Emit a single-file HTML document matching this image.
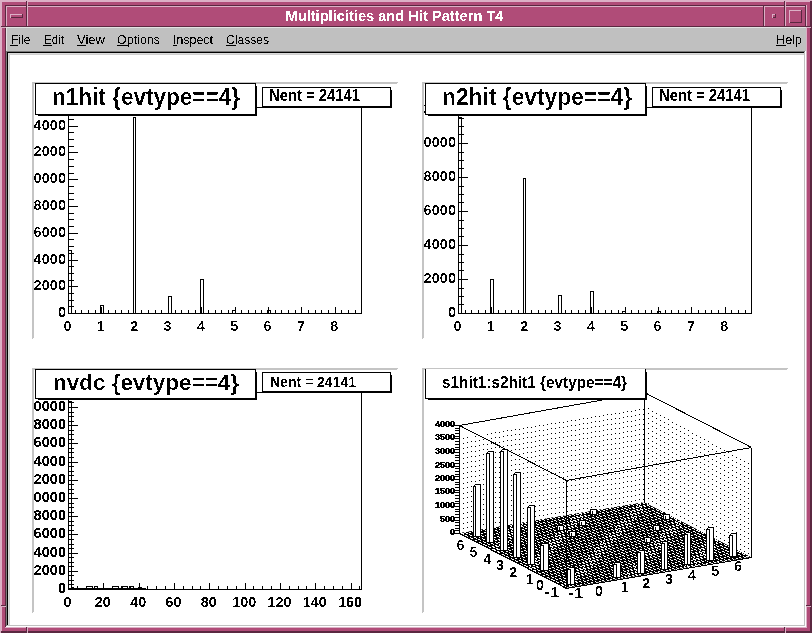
<!DOCTYPE html>
<html><head><meta charset="utf-8"><style>
html,body{margin:0;padding:0;background:#fff;}
body{width:812px;height:633px;overflow:hidden;position:relative;}
svg{position:absolute;left:0;top:0;font-family:"Liberation Sans",sans-serif;}
</style></head><body>
<svg width="812" height="633" viewBox="0 0 812 633" shape-rendering="crispEdges">
<defs><filter id="crisp" x="0" y="0" width="100%" height="100%" color-interpolation-filters="sRGB"><feComponentTransfer><feFuncA type="discrete" tableValues="0 1"/></feComponentTransfer></filter><filter id="thin" x="0" y="0" width="100%" height="100%" color-interpolation-filters="sRGB"><feComponentTransfer><feFuncA type="discrete" tableValues="0 0 0 1 1"/></feComponentTransfer></filter></defs>
<rect x="0" y="0" width="812" height="633" fill="#b04c78"/>
<rect x="0" y="0" width="812" height="2" fill="#dcb0c6"/>
<rect x="0" y="0" width="2" height="633" fill="#dcb0c6"/>
<rect x="810" y="1" width="2" height="632" fill="#5a2840"/>
<rect x="1" y="631" width="811" height="2" fill="#5a2840"/>
<rect x="5" y="5" width="801" height="1" fill="#5a2840"/>
<rect x="5" y="5" width="1" height="622" fill="#5a2840"/>
<rect x="806" y="5" width="1" height="623" fill="#dcb0c6"/>
<rect x="5" y="627" width="802" height="1" fill="#dcb0c6"/>
<rect x="26" y="1" width="1" height="5" fill="#5a2840"/>
<rect x="27" y="0" width="1" height="6" fill="#dcb0c6"/>
<rect x="26" y="627" width="1" height="5" fill="#5a2840"/>
<rect x="27" y="627" width="1" height="6" fill="#dcb0c6"/>
<rect x="784" y="1" width="1" height="5" fill="#5a2840"/>
<rect x="785" y="0" width="1" height="6" fill="#dcb0c6"/>
<rect x="784" y="627" width="1" height="5" fill="#5a2840"/>
<rect x="785" y="627" width="1" height="6" fill="#dcb0c6"/>
<rect x="1" y="26" width="5" height="1" fill="#5a2840"/>
<rect x="0" y="27" width="6" height="1" fill="#dcb0c6"/>
<rect x="806" y="26" width="6" height="1" fill="#5a2840"/>
<rect x="806" y="27" width="5" height="1" fill="#dcb0c6"/>
<rect x="1" y="605" width="5" height="1" fill="#5a2840"/>
<rect x="0" y="606" width="6" height="1" fill="#dcb0c6"/>
<rect x="806" y="605" width="6" height="1" fill="#5a2840"/>
<rect x="806" y="606" width="5" height="1" fill="#dcb0c6"/>
<rect x="6" y="6" width="21" height="1" fill="#dcb0c6"/>
<rect x="6" y="6" width="1" height="21" fill="#dcb0c6"/>
<rect x="26" y="6" width="1" height="21" fill="#5a2840"/>
<rect x="6" y="26" width="21" height="1" fill="#5a2840"/>
<rect x="27" y="6" width="737" height="1" fill="#dcb0c6"/>
<rect x="27" y="6" width="1" height="21" fill="#dcb0c6"/>
<rect x="763" y="6" width="1" height="21" fill="#5a2840"/>
<rect x="27" y="26" width="737" height="1" fill="#5a2840"/>
<rect x="764" y="6" width="21" height="1" fill="#dcb0c6"/>
<rect x="764" y="6" width="1" height="21" fill="#dcb0c6"/>
<rect x="784" y="6" width="1" height="21" fill="#5a2840"/>
<rect x="764" y="26" width="21" height="1" fill="#5a2840"/>
<rect x="785" y="6" width="21" height="1" fill="#dcb0c6"/>
<rect x="785" y="6" width="1" height="21" fill="#dcb0c6"/>
<rect x="805" y="6" width="1" height="21" fill="#5a2840"/>
<rect x="785" y="26" width="21" height="1" fill="#5a2840"/>
<rect x="10" y="14" width="13" height="1" fill="#dcb0c6"/>
<rect x="10" y="14" width="1" height="4" fill="#dcb0c6"/>
<rect x="11" y="17" width="12" height="1" fill="#5a2840"/>
<rect x="22" y="14" width="1" height="4" fill="#5a2840"/>
<rect x="772" y="14" width="4" height="1" fill="#dcb0c6"/>
<rect x="772" y="14" width="1" height="4" fill="#dcb0c6"/>
<rect x="773" y="17" width="3" height="1" fill="#5a2840"/>
<rect x="775" y="14" width="1" height="4" fill="#5a2840"/>
<rect x="789" y="10" width="13" height="1" fill="#dcb0c6"/>
<rect x="789" y="10" width="1" height="13" fill="#dcb0c6"/>
<rect x="790" y="22" width="12" height="1" fill="#5a2840"/>
<rect x="801" y="10" width="1" height="13" fill="#5a2840"/>
<text x="394.5" y="21" font-size="14" font-weight="bold" text-anchor="middle" fill="#fff" textLength="218" lengthAdjust="spacingAndGlyphs" filter="url(#crisp)">Multiplicities and Hit Pattern T4</text>
<rect x="6" y="27" width="800" height="24" fill="#c0c0c0"/>
<rect x="6" y="27" width="800" height="1" fill="#e4e4e4"/>
<rect x="6" y="27" width="1" height="24" fill="#e4e4e4"/>
<text x="11" y="44" font-size="12" font-weight="normal" text-anchor="start" fill="#000" textLength="19.5" lengthAdjust="spacingAndGlyphs" filter="url(#crisp)">File</text>
<rect x="10" y="45" width="8" height="1" fill="#000"/>
<text x="44" y="44" font-size="12" font-weight="normal" text-anchor="start" fill="#000" textLength="20" lengthAdjust="spacingAndGlyphs" filter="url(#crisp)">Edit</text>
<rect x="43" y="45" width="9" height="1" fill="#000"/>
<text x="77" y="44" font-size="12" font-weight="normal" text-anchor="start" fill="#000" textLength="28" lengthAdjust="spacingAndGlyphs" filter="url(#crisp)">View</text>
<rect x="77" y="45" width="9" height="1" fill="#000"/>
<text x="117" y="44" font-size="12" font-weight="normal" text-anchor="start" fill="#000" textLength="43" lengthAdjust="spacingAndGlyphs" filter="url(#crisp)">Options</text>
<rect x="117" y="45" width="11" height="1" fill="#000"/>
<text x="173" y="44" font-size="12" font-weight="normal" text-anchor="start" fill="#000" textLength="40" lengthAdjust="spacingAndGlyphs" filter="url(#crisp)">Inspect</text>
<rect x="173" y="45" width="4" height="1" fill="#000"/>
<text x="226" y="44" font-size="12" font-weight="normal" text-anchor="start" fill="#000" textLength="43" lengthAdjust="spacingAndGlyphs" filter="url(#crisp)">Classes</text>
<rect x="226" y="45" width="10" height="1" fill="#000"/>
<text x="776" y="44" font-size="12" font-weight="normal" text-anchor="start" fill="#000" textLength="26" lengthAdjust="spacingAndGlyphs" filter="url(#crisp)">Help</text>
<rect x="776" y="45" width="10" height="1" fill="#000"/>
<rect x="6" y="51" width="799" height="1" fill="#7a7a7a"/>
<rect x="6" y="51" width="1" height="575" fill="#7a7a7a"/>
<rect x="7" y="52" width="797" height="1" fill="#000"/>
<rect x="7" y="52" width="1" height="573" fill="#000"/>
<rect x="6" y="626" width="800" height="1" fill="#fff"/>
<rect x="805" y="51" width="1" height="576" fill="#fff"/>
<rect x="7" y="625" width="798" height="1" fill="#c0c0c0"/>
<rect x="804" y="52" width="1" height="574" fill="#c0c0c0"/>
<rect x="8" y="53" width="796" height="572" fill="#fff"/>
<rect x="8" y="53" width="796" height="1" fill="#dadada"/>
<rect x="8" y="53" width="1" height="572" fill="#dadada"/>
<rect x="9" y="54" width="795" height="1" fill="#d0d0d0"/>
<rect x="9" y="54" width="1" height="571" fill="#d0d0d0"/>
<polygon points="32,82 398,82 396,84 34,84" fill="#c4c4c4"/>
<polygon points="32,82 34,84 34,337 32,339" fill="#c4c4c4"/>
<clipPath id="c1"><rect x="33" y="84" width="365" height="255"/></clipPath>
<g clip-path="url(#c1)">
<text x="66" y="317" font-size="15" font-weight="bold" text-anchor="end" fill="#000" textLength="8.1" lengthAdjust="spacingAndGlyphs" filter="url(#thin)">0</text>
<text x="66" y="290" font-size="15" font-weight="bold" text-anchor="end" fill="#000" textLength="32.4" lengthAdjust="spacingAndGlyphs" filter="url(#thin)">2000</text>
<text x="66" y="264" font-size="15" font-weight="bold" text-anchor="end" fill="#000" textLength="32.4" lengthAdjust="spacingAndGlyphs" filter="url(#thin)">4000</text>
<text x="66" y="237" font-size="15" font-weight="bold" text-anchor="end" fill="#000" textLength="32.4" lengthAdjust="spacingAndGlyphs" filter="url(#thin)">6000</text>
<text x="66" y="210" font-size="15" font-weight="bold" text-anchor="end" fill="#000" textLength="32.4" lengthAdjust="spacingAndGlyphs" filter="url(#thin)">8000</text>
<text x="66" y="183" font-size="15" font-weight="bold" text-anchor="end" fill="#000" textLength="40.5" lengthAdjust="spacingAndGlyphs" filter="url(#thin)">10000</text>
<text x="66" y="156" font-size="15" font-weight="bold" text-anchor="end" fill="#000" textLength="40.5" lengthAdjust="spacingAndGlyphs" filter="url(#thin)">12000</text>
<text x="66" y="130" font-size="15" font-weight="bold" text-anchor="end" fill="#000" textLength="40.5" lengthAdjust="spacingAndGlyphs" filter="url(#thin)">14000</text>
<text x="67.5" y="331" font-size="15" font-weight="bold" text-anchor="middle" fill="#000" textLength="8" lengthAdjust="spacingAndGlyphs" filter="url(#thin)">0</text>
<text x="100.85" y="331" font-size="15" font-weight="bold" text-anchor="middle" fill="#000" textLength="8" lengthAdjust="spacingAndGlyphs" filter="url(#thin)">1</text>
<text x="134.2" y="331" font-size="15" font-weight="bold" text-anchor="middle" fill="#000" textLength="8" lengthAdjust="spacingAndGlyphs" filter="url(#thin)">2</text>
<text x="167.55" y="331" font-size="15" font-weight="bold" text-anchor="middle" fill="#000" textLength="8" lengthAdjust="spacingAndGlyphs" filter="url(#thin)">3</text>
<text x="200.9" y="331" font-size="15" font-weight="bold" text-anchor="middle" fill="#000" textLength="8" lengthAdjust="spacingAndGlyphs" filter="url(#thin)">4</text>
<text x="234.25" y="331" font-size="15" font-weight="bold" text-anchor="middle" fill="#000" textLength="8" lengthAdjust="spacingAndGlyphs" filter="url(#thin)">5</text>
<text x="267.6" y="331" font-size="15" font-weight="bold" text-anchor="middle" fill="#000" textLength="8" lengthAdjust="spacingAndGlyphs" filter="url(#thin)">6</text>
<text x="300.95000000000005" y="331" font-size="15" font-weight="bold" text-anchor="middle" fill="#000" textLength="8" lengthAdjust="spacingAndGlyphs" filter="url(#thin)">7</text>
<text x="334.3" y="331" font-size="15" font-weight="bold" text-anchor="middle" fill="#000" textLength="8" lengthAdjust="spacingAndGlyphs" filter="url(#thin)">8</text>
<rect x="68" y="107" width="294" height="1" fill="#000"/>
<rect x="68" y="313" width="294" height="1" fill="#000"/>
<rect x="68" y="107" width="1" height="207" fill="#000"/>
<rect x="361" y="107" width="1" height="207" fill="#000"/>
<rect x="68" y="313" width="10" height="1" fill="#000"/>
<rect x="68" y="306" width="6" height="1" fill="#000"/>
<rect x="68" y="300" width="6" height="1" fill="#000"/>
<rect x="68" y="293" width="6" height="1" fill="#000"/>
<rect x="68" y="286" width="10" height="1" fill="#000"/>
<rect x="68" y="280" width="6" height="1" fill="#000"/>
<rect x="68" y="273" width="6" height="1" fill="#000"/>
<rect x="68" y="266" width="6" height="1" fill="#000"/>
<rect x="68" y="260" width="10" height="1" fill="#000"/>
<rect x="68" y="253" width="6" height="1" fill="#000"/>
<rect x="68" y="246" width="6" height="1" fill="#000"/>
<rect x="68" y="239" width="6" height="1" fill="#000"/>
<rect x="68" y="233" width="10" height="1" fill="#000"/>
<rect x="68" y="226" width="6" height="1" fill="#000"/>
<rect x="68" y="219" width="6" height="1" fill="#000"/>
<rect x="68" y="213" width="6" height="1" fill="#000"/>
<rect x="68" y="206" width="10" height="1" fill="#000"/>
<rect x="68" y="199" width="6" height="1" fill="#000"/>
<rect x="68" y="193" width="6" height="1" fill="#000"/>
<rect x="68" y="186" width="6" height="1" fill="#000"/>
<rect x="68" y="179" width="10" height="1" fill="#000"/>
<rect x="68" y="173" width="6" height="1" fill="#000"/>
<rect x="68" y="166" width="6" height="1" fill="#000"/>
<rect x="68" y="159" width="6" height="1" fill="#000"/>
<rect x="68" y="152" width="10" height="1" fill="#000"/>
<rect x="68" y="146" width="6" height="1" fill="#000"/>
<rect x="68" y="139" width="6" height="1" fill="#000"/>
<rect x="68" y="132" width="6" height="1" fill="#000"/>
<rect x="68" y="126" width="10" height="1" fill="#000"/>
<rect x="68" y="119" width="6" height="1" fill="#000"/>
<rect x="68" y="112" width="6" height="1" fill="#000"/>
<rect x="68" y="307" width="1" height="6" fill="#000"/>
<rect x="75" y="310" width="1" height="3" fill="#000"/>
<rect x="81" y="310" width="1" height="3" fill="#000"/>
<rect x="88" y="310" width="1" height="3" fill="#000"/>
<rect x="95" y="310" width="1" height="3" fill="#000"/>
<rect x="101" y="307" width="1" height="6" fill="#000"/>
<rect x="108" y="310" width="1" height="3" fill="#000"/>
<rect x="115" y="310" width="1" height="3" fill="#000"/>
<rect x="121" y="310" width="1" height="3" fill="#000"/>
<rect x="128" y="310" width="1" height="3" fill="#000"/>
<rect x="135" y="307" width="1" height="6" fill="#000"/>
<rect x="141" y="310" width="1" height="3" fill="#000"/>
<rect x="148" y="310" width="1" height="3" fill="#000"/>
<rect x="155" y="310" width="1" height="3" fill="#000"/>
<rect x="161" y="310" width="1" height="3" fill="#000"/>
<rect x="168" y="307" width="1" height="6" fill="#000"/>
<rect x="175" y="310" width="1" height="3" fill="#000"/>
<rect x="181" y="310" width="1" height="3" fill="#000"/>
<rect x="188" y="310" width="1" height="3" fill="#000"/>
<rect x="195" y="310" width="1" height="3" fill="#000"/>
<rect x="201" y="307" width="1" height="6" fill="#000"/>
<rect x="208" y="310" width="1" height="3" fill="#000"/>
<rect x="215" y="310" width="1" height="3" fill="#000"/>
<rect x="221" y="310" width="1" height="3" fill="#000"/>
<rect x="228" y="310" width="1" height="3" fill="#000"/>
<rect x="235" y="307" width="1" height="6" fill="#000"/>
<rect x="241" y="310" width="1" height="3" fill="#000"/>
<rect x="248" y="310" width="1" height="3" fill="#000"/>
<rect x="255" y="310" width="1" height="3" fill="#000"/>
<rect x="261" y="310" width="1" height="3" fill="#000"/>
<rect x="268" y="307" width="1" height="6" fill="#000"/>
<rect x="275" y="310" width="1" height="3" fill="#000"/>
<rect x="281" y="310" width="1" height="3" fill="#000"/>
<rect x="288" y="310" width="1" height="3" fill="#000"/>
<rect x="295" y="310" width="1" height="3" fill="#000"/>
<rect x="301" y="307" width="1" height="6" fill="#000"/>
<rect x="308" y="310" width="1" height="3" fill="#000"/>
<rect x="315" y="310" width="1" height="3" fill="#000"/>
<rect x="321" y="310" width="1" height="3" fill="#000"/>
<rect x="328" y="310" width="1" height="3" fill="#000"/>
<rect x="335" y="307" width="1" height="6" fill="#000"/>
<rect x="341" y="310" width="1" height="3" fill="#000"/>
<rect x="348" y="310" width="1" height="3" fill="#000"/>
<rect x="355" y="310" width="1" height="3" fill="#000"/>
<rect x="68" y="250" width="1" height="64" fill="#000"/>
<rect x="71" y="250" width="1" height="64" fill="#000"/>
<rect x="68" y="250" width="4" height="1" fill="#000"/>
<rect x="100" y="305" width="1" height="9" fill="#000"/>
<rect x="103" y="305" width="1" height="9" fill="#000"/>
<rect x="100" y="305" width="4" height="1" fill="#000"/>
<rect x="133" y="117" width="1" height="197" fill="#000"/>
<rect x="135" y="117" width="1" height="197" fill="#000"/>
<rect x="133" y="117" width="3" height="1" fill="#000"/>
<rect x="168" y="296" width="1" height="18" fill="#000"/>
<rect x="171" y="296" width="1" height="18" fill="#000"/>
<rect x="168" y="296" width="4" height="1" fill="#000"/>
<rect x="200" y="279" width="1" height="35" fill="#000"/>
<rect x="203" y="279" width="1" height="35" fill="#000"/>
<rect x="200" y="279" width="4" height="1" fill="#000"/>
<rect x="232" y="310" width="1" height="4" fill="#000"/>
<rect x="235" y="310" width="1" height="4" fill="#000"/>
<rect x="232" y="310" width="4" height="1" fill="#000"/>
<rect x="267" y="310" width="1" height="4" fill="#000"/>
<rect x="270" y="310" width="1" height="4" fill="#000"/>
<rect x="267" y="310" width="4" height="1" fill="#000"/>
</g>
<rect x="35" y="83" width="221" height="32" fill="#fff"/>
<rect x="35" y="83" width="221" height="1" fill="#000"/>
<rect x="35" y="114" width="221" height="1" fill="#000"/>
<rect x="35" y="83" width="1" height="32" fill="#000"/>
<rect x="255" y="83" width="1" height="32" fill="#000"/>
<rect x="256" y="86" width="1" height="30" fill="#000"/>
<rect x="38" y="115" width="219" height="1" fill="#000"/>
<text x="52" y="105" font-size="23" font-weight="bold" text-anchor="start" fill="#000" textLength="188" lengthAdjust="spacingAndGlyphs" filter="url(#thin)">n1hit {evtype==4}</text>
<rect x="262" y="87" width="129" height="20" fill="#fff"/>
<rect x="262" y="87" width="129" height="1" fill="#000"/>
<rect x="262" y="106" width="129" height="1" fill="#000"/>
<rect x="262" y="87" width="1" height="20" fill="#000"/>
<rect x="390" y="87" width="1" height="20" fill="#000"/>
<rect x="391" y="90" width="1" height="18" fill="#000"/>
<rect x="265" y="107" width="127" height="1" fill="#000"/>
<text x="269" y="101" font-size="16" font-weight="bold" text-anchor="start" fill="#000" textLength="91" lengthAdjust="spacingAndGlyphs" filter="url(#crisp)">Nent = 24141</text>
<polygon points="422,82 788,82 786,84 424,84" fill="#c4c4c4"/>
<polygon points="422,82 424,84 424,337 422,339" fill="#c4c4c4"/>
<clipPath id="c2"><rect x="423" y="84" width="365" height="255"/></clipPath>
<g clip-path="url(#c2)">
<text x="456" y="317" font-size="15" font-weight="bold" text-anchor="end" fill="#000" textLength="8.1" lengthAdjust="spacingAndGlyphs" filter="url(#thin)">0</text>
<text x="456" y="283" font-size="15" font-weight="bold" text-anchor="end" fill="#000" textLength="32.4" lengthAdjust="spacingAndGlyphs" filter="url(#thin)">2000</text>
<text x="456" y="249" font-size="15" font-weight="bold" text-anchor="end" fill="#000" textLength="32.4" lengthAdjust="spacingAndGlyphs" filter="url(#thin)">4000</text>
<text x="456" y="215" font-size="15" font-weight="bold" text-anchor="end" fill="#000" textLength="32.4" lengthAdjust="spacingAndGlyphs" filter="url(#thin)">6000</text>
<text x="456" y="181" font-size="15" font-weight="bold" text-anchor="end" fill="#000" textLength="32.4" lengthAdjust="spacingAndGlyphs" filter="url(#thin)">8000</text>
<text x="456" y="147" font-size="15" font-weight="bold" text-anchor="end" fill="#000" textLength="40.5" lengthAdjust="spacingAndGlyphs" filter="url(#thin)">10000</text>
<text x="456" y="113" font-size="15" font-weight="bold" text-anchor="end" fill="#000" textLength="40.5" lengthAdjust="spacingAndGlyphs" filter="url(#thin)">12000</text>
<text x="457.5" y="331" font-size="15" font-weight="bold" text-anchor="middle" fill="#000" textLength="8" lengthAdjust="spacingAndGlyphs" filter="url(#thin)">0</text>
<text x="490.85" y="331" font-size="15" font-weight="bold" text-anchor="middle" fill="#000" textLength="8" lengthAdjust="spacingAndGlyphs" filter="url(#thin)">1</text>
<text x="524.2" y="331" font-size="15" font-weight="bold" text-anchor="middle" fill="#000" textLength="8" lengthAdjust="spacingAndGlyphs" filter="url(#thin)">2</text>
<text x="557.55" y="331" font-size="15" font-weight="bold" text-anchor="middle" fill="#000" textLength="8" lengthAdjust="spacingAndGlyphs" filter="url(#thin)">3</text>
<text x="590.9" y="331" font-size="15" font-weight="bold" text-anchor="middle" fill="#000" textLength="8" lengthAdjust="spacingAndGlyphs" filter="url(#thin)">4</text>
<text x="624.25" y="331" font-size="15" font-weight="bold" text-anchor="middle" fill="#000" textLength="8" lengthAdjust="spacingAndGlyphs" filter="url(#thin)">5</text>
<text x="657.6" y="331" font-size="15" font-weight="bold" text-anchor="middle" fill="#000" textLength="8" lengthAdjust="spacingAndGlyphs" filter="url(#thin)">6</text>
<text x="690.95" y="331" font-size="15" font-weight="bold" text-anchor="middle" fill="#000" textLength="8" lengthAdjust="spacingAndGlyphs" filter="url(#thin)">7</text>
<text x="724.3" y="331" font-size="15" font-weight="bold" text-anchor="middle" fill="#000" textLength="8" lengthAdjust="spacingAndGlyphs" filter="url(#thin)">8</text>
<rect x="458" y="107" width="294" height="1" fill="#000"/>
<rect x="458" y="313" width="294" height="1" fill="#000"/>
<rect x="458" y="107" width="1" height="207" fill="#000"/>
<rect x="751" y="107" width="1" height="207" fill="#000"/>
<rect x="458" y="313" width="10" height="1" fill="#000"/>
<rect x="458" y="304" width="6" height="1" fill="#000"/>
<rect x="458" y="296" width="6" height="1" fill="#000"/>
<rect x="458" y="288" width="6" height="1" fill="#000"/>
<rect x="458" y="279" width="10" height="1" fill="#000"/>
<rect x="458" y="270" width="6" height="1" fill="#000"/>
<rect x="458" y="262" width="6" height="1" fill="#000"/>
<rect x="458" y="254" width="6" height="1" fill="#000"/>
<rect x="458" y="245" width="10" height="1" fill="#000"/>
<rect x="458" y="236" width="6" height="1" fill="#000"/>
<rect x="458" y="228" width="6" height="1" fill="#000"/>
<rect x="458" y="220" width="6" height="1" fill="#000"/>
<rect x="458" y="211" width="10" height="1" fill="#000"/>
<rect x="458" y="202" width="6" height="1" fill="#000"/>
<rect x="458" y="194" width="6" height="1" fill="#000"/>
<rect x="458" y="186" width="6" height="1" fill="#000"/>
<rect x="458" y="177" width="10" height="1" fill="#000"/>
<rect x="458" y="168" width="6" height="1" fill="#000"/>
<rect x="458" y="160" width="6" height="1" fill="#000"/>
<rect x="458" y="152" width="6" height="1" fill="#000"/>
<rect x="458" y="143" width="10" height="1" fill="#000"/>
<rect x="458" y="134" width="6" height="1" fill="#000"/>
<rect x="458" y="126" width="6" height="1" fill="#000"/>
<rect x="458" y="118" width="6" height="1" fill="#000"/>
<rect x="458" y="109" width="10" height="1" fill="#000"/>
<rect x="458" y="307" width="1" height="6" fill="#000"/>
<rect x="465" y="310" width="1" height="3" fill="#000"/>
<rect x="471" y="310" width="1" height="3" fill="#000"/>
<rect x="478" y="310" width="1" height="3" fill="#000"/>
<rect x="485" y="310" width="1" height="3" fill="#000"/>
<rect x="491" y="307" width="1" height="6" fill="#000"/>
<rect x="498" y="310" width="1" height="3" fill="#000"/>
<rect x="505" y="310" width="1" height="3" fill="#000"/>
<rect x="511" y="310" width="1" height="3" fill="#000"/>
<rect x="518" y="310" width="1" height="3" fill="#000"/>
<rect x="525" y="307" width="1" height="6" fill="#000"/>
<rect x="531" y="310" width="1" height="3" fill="#000"/>
<rect x="538" y="310" width="1" height="3" fill="#000"/>
<rect x="545" y="310" width="1" height="3" fill="#000"/>
<rect x="551" y="310" width="1" height="3" fill="#000"/>
<rect x="558" y="307" width="1" height="6" fill="#000"/>
<rect x="565" y="310" width="1" height="3" fill="#000"/>
<rect x="571" y="310" width="1" height="3" fill="#000"/>
<rect x="578" y="310" width="1" height="3" fill="#000"/>
<rect x="585" y="310" width="1" height="3" fill="#000"/>
<rect x="591" y="307" width="1" height="6" fill="#000"/>
<rect x="598" y="310" width="1" height="3" fill="#000"/>
<rect x="605" y="310" width="1" height="3" fill="#000"/>
<rect x="611" y="310" width="1" height="3" fill="#000"/>
<rect x="618" y="310" width="1" height="3" fill="#000"/>
<rect x="625" y="307" width="1" height="6" fill="#000"/>
<rect x="631" y="310" width="1" height="3" fill="#000"/>
<rect x="638" y="310" width="1" height="3" fill="#000"/>
<rect x="645" y="310" width="1" height="3" fill="#000"/>
<rect x="651" y="310" width="1" height="3" fill="#000"/>
<rect x="658" y="307" width="1" height="6" fill="#000"/>
<rect x="665" y="310" width="1" height="3" fill="#000"/>
<rect x="671" y="310" width="1" height="3" fill="#000"/>
<rect x="678" y="310" width="1" height="3" fill="#000"/>
<rect x="685" y="310" width="1" height="3" fill="#000"/>
<rect x="691" y="307" width="1" height="6" fill="#000"/>
<rect x="698" y="310" width="1" height="3" fill="#000"/>
<rect x="705" y="310" width="1" height="3" fill="#000"/>
<rect x="711" y="310" width="1" height="3" fill="#000"/>
<rect x="718" y="310" width="1" height="3" fill="#000"/>
<rect x="725" y="307" width="1" height="6" fill="#000"/>
<rect x="731" y="310" width="1" height="3" fill="#000"/>
<rect x="738" y="310" width="1" height="3" fill="#000"/>
<rect x="745" y="310" width="1" height="3" fill="#000"/>
<rect x="458" y="117" width="1" height="197" fill="#000"/>
<rect x="461" y="117" width="1" height="197" fill="#000"/>
<rect x="458" y="117" width="4" height="1" fill="#000"/>
<rect x="490" y="279" width="1" height="35" fill="#000"/>
<rect x="493" y="279" width="1" height="35" fill="#000"/>
<rect x="490" y="279" width="4" height="1" fill="#000"/>
<rect x="523" y="178" width="1" height="136" fill="#000"/>
<rect x="525" y="178" width="1" height="136" fill="#000"/>
<rect x="523" y="178" width="3" height="1" fill="#000"/>
<rect x="558" y="295" width="1" height="19" fill="#000"/>
<rect x="561" y="295" width="1" height="19" fill="#000"/>
<rect x="558" y="295" width="4" height="1" fill="#000"/>
<rect x="590" y="291" width="1" height="23" fill="#000"/>
<rect x="593" y="291" width="1" height="23" fill="#000"/>
<rect x="590" y="291" width="4" height="1" fill="#000"/>
<rect x="622" y="311" width="1" height="3" fill="#000"/>
<rect x="625" y="311" width="1" height="3" fill="#000"/>
<rect x="622" y="311" width="4" height="1" fill="#000"/>
<rect x="657" y="311" width="1" height="3" fill="#000"/>
<rect x="660" y="311" width="1" height="3" fill="#000"/>
<rect x="657" y="311" width="4" height="1" fill="#000"/>
</g>
<rect x="425" y="83" width="221" height="32" fill="#fff"/>
<rect x="425" y="83" width="221" height="1" fill="#000"/>
<rect x="425" y="114" width="221" height="1" fill="#000"/>
<rect x="425" y="83" width="1" height="32" fill="#000"/>
<rect x="645" y="83" width="1" height="32" fill="#000"/>
<rect x="646" y="86" width="1" height="30" fill="#000"/>
<rect x="428" y="115" width="219" height="1" fill="#000"/>
<text x="442" y="105" font-size="23" font-weight="bold" text-anchor="start" fill="#000" textLength="190" lengthAdjust="spacingAndGlyphs" filter="url(#thin)">n2hit {evtype==4}</text>
<rect x="652" y="87" width="129" height="20" fill="#fff"/>
<rect x="652" y="87" width="129" height="1" fill="#000"/>
<rect x="652" y="106" width="129" height="1" fill="#000"/>
<rect x="652" y="87" width="1" height="20" fill="#000"/>
<rect x="780" y="87" width="1" height="20" fill="#000"/>
<rect x="781" y="90" width="1" height="18" fill="#000"/>
<rect x="655" y="107" width="127" height="1" fill="#000"/>
<text x="659" y="101" font-size="16" font-weight="bold" text-anchor="start" fill="#000" textLength="91" lengthAdjust="spacingAndGlyphs" filter="url(#crisp)">Nent = 24141</text>
<polygon points="32,368 398,368 396,370 34,370" fill="#c4c4c4"/>
<polygon points="32,368 34,370 34,611 32,613" fill="#c4c4c4"/>
<clipPath id="c3"><rect x="33" y="370" width="365" height="243"/></clipPath>
<g clip-path="url(#c3)">
<text x="66" y="593" font-size="14.5" font-weight="bold" text-anchor="end" fill="#000" textLength="8.1" lengthAdjust="spacingAndGlyphs" filter="url(#crisp)">0</text>
<text x="66" y="575" font-size="14.5" font-weight="bold" text-anchor="end" fill="#000" textLength="32.4" lengthAdjust="spacingAndGlyphs" filter="url(#crisp)">2000</text>
<text x="66" y="557" font-size="14.5" font-weight="bold" text-anchor="end" fill="#000" textLength="32.4" lengthAdjust="spacingAndGlyphs" filter="url(#crisp)">4000</text>
<text x="66" y="538" font-size="14.5" font-weight="bold" text-anchor="end" fill="#000" textLength="32.4" lengthAdjust="spacingAndGlyphs" filter="url(#crisp)">6000</text>
<text x="66" y="520" font-size="14.5" font-weight="bold" text-anchor="end" fill="#000" textLength="32.4" lengthAdjust="spacingAndGlyphs" filter="url(#crisp)">8000</text>
<text x="66" y="502" font-size="14.5" font-weight="bold" text-anchor="end" fill="#000" textLength="40.5" lengthAdjust="spacingAndGlyphs" filter="url(#crisp)">10000</text>
<text x="66" y="484" font-size="14.5" font-weight="bold" text-anchor="end" fill="#000" textLength="40.5" lengthAdjust="spacingAndGlyphs" filter="url(#crisp)">12000</text>
<text x="66" y="466" font-size="14.5" font-weight="bold" text-anchor="end" fill="#000" textLength="40.5" lengthAdjust="spacingAndGlyphs" filter="url(#crisp)">14000</text>
<text x="66" y="447" font-size="14.5" font-weight="bold" text-anchor="end" fill="#000" textLength="40.5" lengthAdjust="spacingAndGlyphs" filter="url(#crisp)">16000</text>
<text x="66" y="429" font-size="14.5" font-weight="bold" text-anchor="end" fill="#000" textLength="40.5" lengthAdjust="spacingAndGlyphs" filter="url(#crisp)">18000</text>
<text x="66" y="411" font-size="14.5" font-weight="bold" text-anchor="end" fill="#000" textLength="40.5" lengthAdjust="spacingAndGlyphs" filter="url(#crisp)">20000</text>
<text x="67.5" y="607" font-size="14.5" font-weight="bold" text-anchor="middle" fill="#000" textLength="8" lengthAdjust="spacingAndGlyphs" filter="url(#crisp)">0</text>
<text x="102.83" y="607" font-size="14.5" font-weight="bold" text-anchor="middle" fill="#000" textLength="16" lengthAdjust="spacingAndGlyphs" filter="url(#crisp)">20</text>
<text x="138.16" y="607" font-size="14.5" font-weight="bold" text-anchor="middle" fill="#000" textLength="16" lengthAdjust="spacingAndGlyphs" filter="url(#crisp)">40</text>
<text x="173.49" y="607" font-size="14.5" font-weight="bold" text-anchor="middle" fill="#000" textLength="16" lengthAdjust="spacingAndGlyphs" filter="url(#crisp)">60</text>
<text x="208.82" y="607" font-size="14.5" font-weight="bold" text-anchor="middle" fill="#000" textLength="16" lengthAdjust="spacingAndGlyphs" filter="url(#crisp)">80</text>
<text x="244.15" y="607" font-size="14.5" font-weight="bold" text-anchor="middle" fill="#000" textLength="24" lengthAdjust="spacingAndGlyphs" filter="url(#crisp)">100</text>
<text x="279.48" y="607" font-size="14.5" font-weight="bold" text-anchor="middle" fill="#000" textLength="24" lengthAdjust="spacingAndGlyphs" filter="url(#crisp)">120</text>
<text x="314.81" y="607" font-size="14.5" font-weight="bold" text-anchor="middle" fill="#000" textLength="24" lengthAdjust="spacingAndGlyphs" filter="url(#crisp)">140</text>
<text x="350.14" y="607" font-size="14.5" font-weight="bold" text-anchor="middle" fill="#000" textLength="24" lengthAdjust="spacingAndGlyphs" filter="url(#crisp)">160</text>
<rect x="68" y="392" width="294" height="1" fill="#000"/>
<rect x="68" y="589" width="294" height="1" fill="#000"/>
<rect x="68" y="392" width="1" height="198" fill="#000"/>
<rect x="361" y="392" width="1" height="198" fill="#000"/>
<rect x="68" y="589" width="10" height="1" fill="#000"/>
<rect x="68" y="584" width="6" height="1" fill="#000"/>
<rect x="68" y="580" width="6" height="1" fill="#000"/>
<rect x="68" y="575" width="6" height="1" fill="#000"/>
<rect x="68" y="571" width="10" height="1" fill="#000"/>
<rect x="68" y="566" width="6" height="1" fill="#000"/>
<rect x="68" y="562" width="6" height="1" fill="#000"/>
<rect x="68" y="557" width="6" height="1" fill="#000"/>
<rect x="68" y="553" width="10" height="1" fill="#000"/>
<rect x="68" y="548" width="6" height="1" fill="#000"/>
<rect x="68" y="544" width="6" height="1" fill="#000"/>
<rect x="68" y="539" width="6" height="1" fill="#000"/>
<rect x="68" y="534" width="10" height="1" fill="#000"/>
<rect x="68" y="530" width="6" height="1" fill="#000"/>
<rect x="68" y="525" width="6" height="1" fill="#000"/>
<rect x="68" y="521" width="6" height="1" fill="#000"/>
<rect x="68" y="516" width="10" height="1" fill="#000"/>
<rect x="68" y="512" width="6" height="1" fill="#000"/>
<rect x="68" y="507" width="6" height="1" fill="#000"/>
<rect x="68" y="503" width="6" height="1" fill="#000"/>
<rect x="68" y="498" width="10" height="1" fill="#000"/>
<rect x="68" y="493" width="6" height="1" fill="#000"/>
<rect x="68" y="489" width="6" height="1" fill="#000"/>
<rect x="68" y="484" width="6" height="1" fill="#000"/>
<rect x="68" y="480" width="10" height="1" fill="#000"/>
<rect x="68" y="475" width="6" height="1" fill="#000"/>
<rect x="68" y="471" width="6" height="1" fill="#000"/>
<rect x="68" y="466" width="6" height="1" fill="#000"/>
<rect x="68" y="462" width="10" height="1" fill="#000"/>
<rect x="68" y="457" width="6" height="1" fill="#000"/>
<rect x="68" y="452" width="6" height="1" fill="#000"/>
<rect x="68" y="448" width="6" height="1" fill="#000"/>
<rect x="68" y="443" width="10" height="1" fill="#000"/>
<rect x="68" y="439" width="6" height="1" fill="#000"/>
<rect x="68" y="434" width="6" height="1" fill="#000"/>
<rect x="68" y="430" width="6" height="1" fill="#000"/>
<rect x="68" y="425" width="10" height="1" fill="#000"/>
<rect x="68" y="421" width="6" height="1" fill="#000"/>
<rect x="68" y="416" width="6" height="1" fill="#000"/>
<rect x="68" y="412" width="6" height="1" fill="#000"/>
<rect x="68" y="407" width="10" height="1" fill="#000"/>
<rect x="68" y="402" width="6" height="1" fill="#000"/>
<rect x="68" y="398" width="6" height="1" fill="#000"/>
<rect x="68" y="393" width="6" height="1" fill="#000"/>
<rect x="68" y="583" width="1" height="6" fill="#000"/>
<rect x="77" y="586" width="1" height="3" fill="#000"/>
<rect x="86" y="586" width="1" height="3" fill="#000"/>
<rect x="94" y="586" width="1" height="3" fill="#000"/>
<rect x="103" y="583" width="1" height="6" fill="#000"/>
<rect x="112" y="586" width="1" height="3" fill="#000"/>
<rect x="121" y="586" width="1" height="3" fill="#000"/>
<rect x="130" y="586" width="1" height="3" fill="#000"/>
<rect x="139" y="583" width="1" height="6" fill="#000"/>
<rect x="147" y="586" width="1" height="3" fill="#000"/>
<rect x="156" y="586" width="1" height="3" fill="#000"/>
<rect x="165" y="586" width="1" height="3" fill="#000"/>
<rect x="174" y="583" width="1" height="6" fill="#000"/>
<rect x="183" y="586" width="1" height="3" fill="#000"/>
<rect x="192" y="586" width="1" height="3" fill="#000"/>
<rect x="200" y="586" width="1" height="3" fill="#000"/>
<rect x="209" y="583" width="1" height="6" fill="#000"/>
<rect x="218" y="586" width="1" height="3" fill="#000"/>
<rect x="227" y="586" width="1" height="3" fill="#000"/>
<rect x="236" y="586" width="1" height="3" fill="#000"/>
<rect x="245" y="583" width="1" height="6" fill="#000"/>
<rect x="253" y="586" width="1" height="3" fill="#000"/>
<rect x="262" y="586" width="1" height="3" fill="#000"/>
<rect x="271" y="586" width="1" height="3" fill="#000"/>
<rect x="280" y="583" width="1" height="6" fill="#000"/>
<rect x="289" y="586" width="1" height="3" fill="#000"/>
<rect x="298" y="586" width="1" height="3" fill="#000"/>
<rect x="306" y="586" width="1" height="3" fill="#000"/>
<rect x="315" y="583" width="1" height="6" fill="#000"/>
<rect x="324" y="586" width="1" height="3" fill="#000"/>
<rect x="333" y="586" width="1" height="3" fill="#000"/>
<rect x="342" y="586" width="1" height="3" fill="#000"/>
<rect x="351" y="583" width="1" height="6" fill="#000"/>
<rect x="359" y="586" width="1" height="3" fill="#000"/>
<rect x="68" y="401" width="1" height="189" fill="#000"/>
<rect x="71" y="401" width="1" height="189" fill="#000"/>
<rect x="68" y="401" width="4" height="1" fill="#000"/>
<rect x="71" y="587" width="1" height="3" fill="#000"/>
<rect x="73" y="587" width="1" height="3" fill="#000"/>
<rect x="71" y="587" width="3" height="1" fill="#000"/>
<rect x="86" y="586" width="1" height="4" fill="#000"/>
<rect x="92" y="586" width="1" height="4" fill="#000"/>
<rect x="86" y="586" width="7" height="1" fill="#000"/>
<rect x="94" y="586" width="1" height="4" fill="#000"/>
<rect x="97" y="586" width="1" height="4" fill="#000"/>
<rect x="94" y="586" width="4" height="1" fill="#000"/>
<rect x="112" y="586" width="1" height="4" fill="#000"/>
<rect x="118" y="586" width="1" height="4" fill="#000"/>
<rect x="112" y="586" width="7" height="1" fill="#000"/>
<rect x="122" y="586" width="1" height="4" fill="#000"/>
<rect x="127" y="586" width="1" height="4" fill="#000"/>
<rect x="122" y="586" width="6" height="1" fill="#000"/>
<rect x="129" y="586" width="1" height="4" fill="#000"/>
<rect x="133" y="586" width="1" height="4" fill="#000"/>
<rect x="129" y="586" width="5" height="1" fill="#000"/>
<rect x="138" y="587" width="1" height="3" fill="#000"/>
<rect x="141" y="587" width="1" height="3" fill="#000"/>
<rect x="138" y="587" width="4" height="1" fill="#000"/>
<rect x="68" y="588" width="78" height="1" fill="#000"/>
</g>
<rect x="35" y="369" width="221" height="30" fill="#fff"/>
<rect x="35" y="369" width="221" height="1" fill="#000"/>
<rect x="35" y="398" width="221" height="1" fill="#000"/>
<rect x="35" y="369" width="1" height="30" fill="#000"/>
<rect x="255" y="369" width="1" height="30" fill="#000"/>
<rect x="256" y="372" width="1" height="28" fill="#000"/>
<rect x="38" y="399" width="219" height="1" fill="#000"/>
<text x="53" y="390" font-size="22" font-weight="bold" text-anchor="start" fill="#000" textLength="186" lengthAdjust="spacingAndGlyphs" filter="url(#thin)">nvdc {evtype==4}</text>
<rect x="262" y="372" width="129" height="20" fill="#fff"/>
<rect x="262" y="372" width="129" height="1" fill="#000"/>
<rect x="262" y="391" width="129" height="1" fill="#000"/>
<rect x="262" y="372" width="1" height="20" fill="#000"/>
<rect x="390" y="372" width="1" height="20" fill="#000"/>
<rect x="391" y="375" width="1" height="18" fill="#000"/>
<rect x="265" y="392" width="127" height="1" fill="#000"/>
<text x="270" y="387" font-size="15" font-weight="bold" text-anchor="start" fill="#000" textLength="86" lengthAdjust="spacingAndGlyphs" filter="url(#crisp)">Nent = 24141</text>
<polygon points="422,368 788,368 786,370 424,370" fill="#c4c4c4"/>
<polygon points="422,368 424,370 424,611 422,613" fill="#c4c4c4"/>
<path d="M459,443h1v1h-1zM459,448h1v1h-1zM459,453h1v1h-1zM459,458h1v1h-1zM459,463h1v1h-1zM459,468h1v1h-1zM459,473h1v1h-1zM459,478h1v1h-1zM459,483h1v1h-1zM459,488h1v1h-1zM459,493h1v1h-1zM459,498h1v1h-1zM459,503h1v1h-1zM459,508h1v1h-1zM459,513h1v1h-1zM459,518h1v1h-1zM459,523h1v1h-1zM459,528h1v1h-1zM463,438h1v1h-1zM463,443h1v1h-1zM463,448h1v1h-1zM463,453h1v1h-1zM463,458h1v1h-1zM463,463h1v1h-1zM463,468h1v1h-1zM463,473h1v1h-1zM463,478h1v1h-1zM463,483h1v1h-1zM463,488h1v1h-1zM463,493h1v1h-1zM463,498h1v1h-1zM463,503h1v1h-1zM463,508h1v1h-1zM463,513h1v1h-1zM463,518h1v1h-1zM463,523h1v1h-1zM463,528h1v1h-1zM467,437h1v1h-1zM467,442h1v1h-1zM467,447h1v1h-1zM467,452h1v1h-1zM467,457h1v1h-1zM467,462h1v1h-1zM467,467h1v1h-1zM467,472h1v1h-1zM467,477h1v1h-1zM467,482h1v1h-1zM467,487h1v1h-1zM467,492h1v1h-1zM467,497h1v1h-1zM467,502h1v1h-1zM467,507h1v1h-1zM467,512h1v1h-1zM467,517h1v1h-1zM467,522h1v1h-1zM467,527h1v1h-1zM471,441h1v1h-1zM471,446h1v1h-1zM471,451h1v1h-1zM471,456h1v1h-1zM471,461h1v1h-1zM471,466h1v1h-1zM471,471h1v1h-1zM471,476h1v1h-1zM471,481h1v1h-1zM471,486h1v1h-1zM471,491h1v1h-1zM471,496h1v1h-1zM471,501h1v1h-1zM471,506h1v1h-1zM471,511h1v1h-1zM471,516h1v1h-1zM471,521h1v1h-1zM471,526h1v1h-1zM475,436h1v1h-1zM475,441h1v1h-1zM475,446h1v1h-1zM475,451h1v1h-1zM475,456h1v1h-1zM475,461h1v1h-1zM475,466h1v1h-1zM475,471h1v1h-1zM475,476h1v1h-1zM475,481h1v1h-1zM475,486h1v1h-1zM475,491h1v1h-1zM475,496h1v1h-1zM475,501h1v1h-1zM475,506h1v1h-1zM475,511h1v1h-1zM475,516h1v1h-1zM475,521h1v1h-1zM475,526h1v1h-1zM479,435h1v1h-1zM479,440h1v1h-1zM479,445h1v1h-1zM479,450h1v1h-1zM479,455h1v1h-1zM479,460h1v1h-1zM479,465h1v1h-1zM479,470h1v1h-1zM479,475h1v1h-1zM479,480h1v1h-1zM479,485h1v1h-1zM479,490h1v1h-1zM479,495h1v1h-1zM479,500h1v1h-1zM479,505h1v1h-1zM479,510h1v1h-1zM479,515h1v1h-1zM479,520h1v1h-1zM479,525h1v1h-1zM483,439h1v1h-1zM483,444h1v1h-1zM483,449h1v1h-1zM483,454h1v1h-1zM483,459h1v1h-1zM483,464h1v1h-1zM483,469h1v1h-1zM483,474h1v1h-1zM483,479h1v1h-1zM483,484h1v1h-1zM483,489h1v1h-1zM483,494h1v1h-1zM483,499h1v1h-1zM483,504h1v1h-1zM483,509h1v1h-1zM483,514h1v1h-1zM483,519h1v1h-1zM483,524h1v1h-1zM487,434h1v1h-1zM487,439h1v1h-1zM487,444h1v1h-1zM487,449h1v1h-1zM487,454h1v1h-1zM487,459h1v1h-1zM487,464h1v1h-1zM487,469h1v1h-1zM487,474h1v1h-1zM487,479h1v1h-1zM487,484h1v1h-1zM487,489h1v1h-1zM487,494h1v1h-1zM487,499h1v1h-1zM487,504h1v1h-1zM487,509h1v1h-1zM487,514h1v1h-1zM487,519h1v1h-1zM487,524h1v1h-1zM491,433h1v1h-1zM491,438h1v1h-1zM491,443h1v1h-1zM491,448h1v1h-1zM491,453h1v1h-1zM491,458h1v1h-1zM491,463h1v1h-1zM491,468h1v1h-1zM491,473h1v1h-1zM491,478h1v1h-1zM491,483h1v1h-1zM491,488h1v1h-1zM491,493h1v1h-1zM491,498h1v1h-1zM491,503h1v1h-1zM491,508h1v1h-1zM491,513h1v1h-1zM491,518h1v1h-1zM491,523h1v1h-1zM495,432h1v1h-1zM495,437h1v1h-1zM495,442h1v1h-1zM495,447h1v1h-1zM495,452h1v1h-1zM495,457h1v1h-1zM495,462h1v1h-1zM495,467h1v1h-1zM495,472h1v1h-1zM495,477h1v1h-1zM495,482h1v1h-1zM495,487h1v1h-1zM495,492h1v1h-1zM495,497h1v1h-1zM495,502h1v1h-1zM495,507h1v1h-1zM495,512h1v1h-1zM495,517h1v1h-1zM495,522h1v1h-1zM499,432h1v1h-1zM499,437h1v1h-1zM499,442h1v1h-1zM499,447h1v1h-1zM499,452h1v1h-1zM499,457h1v1h-1zM499,462h1v1h-1zM499,467h1v1h-1zM499,472h1v1h-1zM499,477h1v1h-1zM499,482h1v1h-1zM499,487h1v1h-1zM499,492h1v1h-1zM499,497h1v1h-1zM499,502h1v1h-1zM499,507h1v1h-1zM499,512h1v1h-1zM499,517h1v1h-1zM499,522h1v1h-1zM503,431h1v1h-1zM503,436h1v1h-1zM503,441h1v1h-1zM503,446h1v1h-1zM503,451h1v1h-1zM503,456h1v1h-1zM503,461h1v1h-1zM503,466h1v1h-1zM503,471h1v1h-1zM503,476h1v1h-1zM503,481h1v1h-1zM503,486h1v1h-1zM503,491h1v1h-1zM503,496h1v1h-1zM503,501h1v1h-1zM503,506h1v1h-1zM503,511h1v1h-1zM503,516h1v1h-1zM503,521h1v1h-1zM507,430h1v1h-1zM507,435h1v1h-1zM507,440h1v1h-1zM507,445h1v1h-1zM507,450h1v1h-1zM507,455h1v1h-1zM507,460h1v1h-1zM507,465h1v1h-1zM507,470h1v1h-1zM507,475h1v1h-1zM507,480h1v1h-1zM507,485h1v1h-1zM507,490h1v1h-1zM507,495h1v1h-1zM507,500h1v1h-1zM507,505h1v1h-1zM507,510h1v1h-1zM507,515h1v1h-1zM507,520h1v1h-1zM511,430h1v1h-1zM511,435h1v1h-1zM511,440h1v1h-1zM511,445h1v1h-1zM511,450h1v1h-1zM511,455h1v1h-1zM511,460h1v1h-1zM511,465h1v1h-1zM511,470h1v1h-1zM511,475h1v1h-1zM511,480h1v1h-1zM511,485h1v1h-1zM511,490h1v1h-1zM511,495h1v1h-1zM511,500h1v1h-1zM511,505h1v1h-1zM511,510h1v1h-1zM511,515h1v1h-1zM511,520h1v1h-1zM515,429h1v1h-1zM515,434h1v1h-1zM515,439h1v1h-1zM515,444h1v1h-1zM515,449h1v1h-1zM515,454h1v1h-1zM515,459h1v1h-1zM515,464h1v1h-1zM515,469h1v1h-1zM515,474h1v1h-1zM515,479h1v1h-1zM515,484h1v1h-1zM515,489h1v1h-1zM515,494h1v1h-1zM515,499h1v1h-1zM515,504h1v1h-1zM515,509h1v1h-1zM515,514h1v1h-1zM515,519h1v1h-1zM519,429h1v1h-1zM519,434h1v1h-1zM519,439h1v1h-1zM519,444h1v1h-1zM519,449h1v1h-1zM519,454h1v1h-1zM519,459h1v1h-1zM519,464h1v1h-1zM519,469h1v1h-1zM519,474h1v1h-1zM519,479h1v1h-1zM519,484h1v1h-1zM519,489h1v1h-1zM519,494h1v1h-1zM519,499h1v1h-1zM519,504h1v1h-1zM519,509h1v1h-1zM519,514h1v1h-1zM519,519h1v1h-1zM523,428h1v1h-1zM523,433h1v1h-1zM523,438h1v1h-1zM523,443h1v1h-1zM523,448h1v1h-1zM523,453h1v1h-1zM523,458h1v1h-1zM523,463h1v1h-1zM523,468h1v1h-1zM523,473h1v1h-1zM523,478h1v1h-1zM523,483h1v1h-1zM523,488h1v1h-1zM523,493h1v1h-1zM523,498h1v1h-1zM523,503h1v1h-1zM523,508h1v1h-1zM523,513h1v1h-1zM523,518h1v1h-1zM527,427h1v1h-1zM527,432h1v1h-1zM527,437h1v1h-1zM527,442h1v1h-1zM527,447h1v1h-1zM527,452h1v1h-1zM527,457h1v1h-1zM527,462h1v1h-1zM527,467h1v1h-1zM527,472h1v1h-1zM527,477h1v1h-1zM527,482h1v1h-1zM527,487h1v1h-1zM527,492h1v1h-1zM527,497h1v1h-1zM527,502h1v1h-1zM527,507h1v1h-1zM527,512h1v1h-1zM527,517h1v1h-1zM531,427h1v1h-1zM531,432h1v1h-1zM531,437h1v1h-1zM531,442h1v1h-1zM531,447h1v1h-1zM531,452h1v1h-1zM531,457h1v1h-1zM531,462h1v1h-1zM531,467h1v1h-1zM531,472h1v1h-1zM531,477h1v1h-1zM531,482h1v1h-1zM531,487h1v1h-1zM531,492h1v1h-1zM531,497h1v1h-1zM531,502h1v1h-1zM531,507h1v1h-1zM531,512h1v1h-1zM531,517h1v1h-1zM535,426h1v1h-1zM535,431h1v1h-1zM535,436h1v1h-1zM535,441h1v1h-1zM535,446h1v1h-1zM535,451h1v1h-1zM535,456h1v1h-1zM535,461h1v1h-1zM535,466h1v1h-1zM535,471h1v1h-1zM535,476h1v1h-1zM535,481h1v1h-1zM535,486h1v1h-1zM535,491h1v1h-1zM535,496h1v1h-1zM535,501h1v1h-1zM535,506h1v1h-1zM535,511h1v1h-1zM535,516h1v1h-1zM539,425h1v1h-1zM539,430h1v1h-1zM539,435h1v1h-1zM539,440h1v1h-1zM539,445h1v1h-1zM539,450h1v1h-1zM539,455h1v1h-1zM539,460h1v1h-1zM539,465h1v1h-1zM539,470h1v1h-1zM539,475h1v1h-1zM539,480h1v1h-1zM539,485h1v1h-1zM539,490h1v1h-1zM539,495h1v1h-1zM539,500h1v1h-1zM539,505h1v1h-1zM539,510h1v1h-1zM539,515h1v1h-1zM543,425h1v1h-1zM543,430h1v1h-1zM543,435h1v1h-1zM543,440h1v1h-1zM543,445h1v1h-1zM543,450h1v1h-1zM543,455h1v1h-1zM543,460h1v1h-1zM543,465h1v1h-1zM543,470h1v1h-1zM543,475h1v1h-1zM543,480h1v1h-1zM543,485h1v1h-1zM543,490h1v1h-1zM543,495h1v1h-1zM543,500h1v1h-1zM543,505h1v1h-1zM543,510h1v1h-1zM543,515h1v1h-1zM547,424h1v1h-1zM547,429h1v1h-1zM547,434h1v1h-1zM547,439h1v1h-1zM547,444h1v1h-1zM547,449h1v1h-1zM547,454h1v1h-1zM547,459h1v1h-1zM547,464h1v1h-1zM547,469h1v1h-1zM547,474h1v1h-1zM547,479h1v1h-1zM547,484h1v1h-1zM547,489h1v1h-1zM547,494h1v1h-1zM547,499h1v1h-1zM547,504h1v1h-1zM547,509h1v1h-1zM547,514h1v1h-1zM551,423h1v1h-1zM551,428h1v1h-1zM551,433h1v1h-1zM551,438h1v1h-1zM551,443h1v1h-1zM551,448h1v1h-1zM551,453h1v1h-1zM551,458h1v1h-1zM551,463h1v1h-1zM551,468h1v1h-1zM551,473h1v1h-1zM551,478h1v1h-1zM551,483h1v1h-1zM551,488h1v1h-1zM551,493h1v1h-1zM551,498h1v1h-1zM551,503h1v1h-1zM551,508h1v1h-1zM551,513h1v1h-1zM555,423h1v1h-1zM555,428h1v1h-1zM555,433h1v1h-1zM555,438h1v1h-1zM555,443h1v1h-1zM555,448h1v1h-1zM555,453h1v1h-1zM555,458h1v1h-1zM555,463h1v1h-1zM555,468h1v1h-1zM555,473h1v1h-1zM555,478h1v1h-1zM555,483h1v1h-1zM555,488h1v1h-1zM555,493h1v1h-1zM555,498h1v1h-1zM555,503h1v1h-1zM555,508h1v1h-1zM555,513h1v1h-1zM559,422h1v1h-1zM559,427h1v1h-1zM559,432h1v1h-1zM559,437h1v1h-1zM559,442h1v1h-1zM559,447h1v1h-1zM559,452h1v1h-1zM559,457h1v1h-1zM559,462h1v1h-1zM559,467h1v1h-1zM559,472h1v1h-1zM559,477h1v1h-1zM559,482h1v1h-1zM559,487h1v1h-1zM559,492h1v1h-1zM559,497h1v1h-1zM559,502h1v1h-1zM559,507h1v1h-1zM559,512h1v1h-1zM563,422h1v1h-1zM563,427h1v1h-1zM563,432h1v1h-1zM563,437h1v1h-1zM563,442h1v1h-1zM563,447h1v1h-1zM563,452h1v1h-1zM563,457h1v1h-1zM563,462h1v1h-1zM563,467h1v1h-1zM563,472h1v1h-1zM563,477h1v1h-1zM563,482h1v1h-1zM563,487h1v1h-1zM563,492h1v1h-1zM563,497h1v1h-1zM563,502h1v1h-1zM563,507h1v1h-1zM563,512h1v1h-1zM567,421h1v1h-1zM567,426h1v1h-1zM567,431h1v1h-1zM567,436h1v1h-1zM567,441h1v1h-1zM567,446h1v1h-1zM567,451h1v1h-1zM567,456h1v1h-1zM567,461h1v1h-1zM567,466h1v1h-1zM567,471h1v1h-1zM567,476h1v1h-1zM567,481h1v1h-1zM567,486h1v1h-1zM567,491h1v1h-1zM567,496h1v1h-1zM567,501h1v1h-1zM567,506h1v1h-1zM567,511h1v1h-1zM571,420h1v1h-1zM571,425h1v1h-1zM571,430h1v1h-1zM571,435h1v1h-1zM571,440h1v1h-1zM571,445h1v1h-1zM571,450h1v1h-1zM571,455h1v1h-1zM571,460h1v1h-1zM571,465h1v1h-1zM571,470h1v1h-1zM571,475h1v1h-1zM571,480h1v1h-1zM571,485h1v1h-1zM571,490h1v1h-1zM571,495h1v1h-1zM571,500h1v1h-1zM571,505h1v1h-1zM571,510h1v1h-1zM575,420h1v1h-1zM575,425h1v1h-1zM575,430h1v1h-1zM575,435h1v1h-1zM575,440h1v1h-1zM575,445h1v1h-1zM575,450h1v1h-1zM575,455h1v1h-1zM575,460h1v1h-1zM575,465h1v1h-1zM575,470h1v1h-1zM575,475h1v1h-1zM575,480h1v1h-1zM575,485h1v1h-1zM575,490h1v1h-1zM575,495h1v1h-1zM575,500h1v1h-1zM575,505h1v1h-1zM575,510h1v1h-1zM579,419h1v1h-1zM579,424h1v1h-1zM579,429h1v1h-1zM579,434h1v1h-1zM579,439h1v1h-1zM579,444h1v1h-1zM579,449h1v1h-1zM579,454h1v1h-1zM579,459h1v1h-1zM579,464h1v1h-1zM579,469h1v1h-1zM579,474h1v1h-1zM579,479h1v1h-1zM579,484h1v1h-1zM579,489h1v1h-1zM579,494h1v1h-1zM579,499h1v1h-1zM579,504h1v1h-1zM579,509h1v1h-1zM583,418h1v1h-1zM583,423h1v1h-1zM583,428h1v1h-1zM583,433h1v1h-1zM583,438h1v1h-1zM583,443h1v1h-1zM583,448h1v1h-1zM583,453h1v1h-1zM583,458h1v1h-1zM583,463h1v1h-1zM583,468h1v1h-1zM583,473h1v1h-1zM583,478h1v1h-1zM583,483h1v1h-1zM583,488h1v1h-1zM583,493h1v1h-1zM583,498h1v1h-1zM583,503h1v1h-1zM583,508h1v1h-1zM587,418h1v1h-1zM587,423h1v1h-1zM587,428h1v1h-1zM587,433h1v1h-1zM587,438h1v1h-1zM587,443h1v1h-1zM587,448h1v1h-1zM587,453h1v1h-1zM587,458h1v1h-1zM587,463h1v1h-1zM587,468h1v1h-1zM587,473h1v1h-1zM587,478h1v1h-1zM587,483h1v1h-1zM587,488h1v1h-1zM587,493h1v1h-1zM587,498h1v1h-1zM587,503h1v1h-1zM587,508h1v1h-1zM591,417h1v1h-1zM591,422h1v1h-1zM591,427h1v1h-1zM591,432h1v1h-1zM591,437h1v1h-1zM591,442h1v1h-1zM591,447h1v1h-1zM591,452h1v1h-1zM591,457h1v1h-1zM591,462h1v1h-1zM591,467h1v1h-1zM591,472h1v1h-1zM591,477h1v1h-1zM591,482h1v1h-1zM591,487h1v1h-1zM591,492h1v1h-1zM591,497h1v1h-1zM591,502h1v1h-1zM591,507h1v1h-1zM595,416h1v1h-1zM595,421h1v1h-1zM595,426h1v1h-1zM595,431h1v1h-1zM595,436h1v1h-1zM595,441h1v1h-1zM595,446h1v1h-1zM595,451h1v1h-1zM595,456h1v1h-1zM595,461h1v1h-1zM595,466h1v1h-1zM595,471h1v1h-1zM595,476h1v1h-1zM595,481h1v1h-1zM595,486h1v1h-1zM595,491h1v1h-1zM595,496h1v1h-1zM595,501h1v1h-1zM595,506h1v1h-1zM599,416h1v1h-1zM599,421h1v1h-1zM599,426h1v1h-1zM599,431h1v1h-1zM599,436h1v1h-1zM599,441h1v1h-1zM599,446h1v1h-1zM599,451h1v1h-1zM599,456h1v1h-1zM599,461h1v1h-1zM599,466h1v1h-1zM599,471h1v1h-1zM599,476h1v1h-1zM599,481h1v1h-1zM599,486h1v1h-1zM599,491h1v1h-1zM599,496h1v1h-1zM599,501h1v1h-1zM599,506h1v1h-1zM603,415h1v1h-1zM603,420h1v1h-1zM603,425h1v1h-1zM603,430h1v1h-1zM603,435h1v1h-1zM603,440h1v1h-1zM603,445h1v1h-1zM603,450h1v1h-1zM603,455h1v1h-1zM603,460h1v1h-1zM603,465h1v1h-1zM603,470h1v1h-1zM603,475h1v1h-1zM603,480h1v1h-1zM603,485h1v1h-1zM603,490h1v1h-1zM603,495h1v1h-1zM603,500h1v1h-1zM603,505h1v1h-1zM607,414h1v1h-1zM607,419h1v1h-1zM607,424h1v1h-1zM607,429h1v1h-1zM607,434h1v1h-1zM607,439h1v1h-1zM607,444h1v1h-1zM607,449h1v1h-1zM607,454h1v1h-1zM607,459h1v1h-1zM607,464h1v1h-1zM607,469h1v1h-1zM607,474h1v1h-1zM607,479h1v1h-1zM607,484h1v1h-1zM607,489h1v1h-1zM607,494h1v1h-1zM607,499h1v1h-1zM607,504h1v1h-1zM611,414h1v1h-1zM611,419h1v1h-1zM611,424h1v1h-1zM611,429h1v1h-1zM611,434h1v1h-1zM611,439h1v1h-1zM611,444h1v1h-1zM611,449h1v1h-1zM611,454h1v1h-1zM611,459h1v1h-1zM611,464h1v1h-1zM611,469h1v1h-1zM611,474h1v1h-1zM611,479h1v1h-1zM611,484h1v1h-1zM611,489h1v1h-1zM611,494h1v1h-1zM611,499h1v1h-1zM611,504h1v1h-1zM615,413h1v1h-1zM615,418h1v1h-1zM615,423h1v1h-1zM615,428h1v1h-1zM615,433h1v1h-1zM615,438h1v1h-1zM615,443h1v1h-1zM615,448h1v1h-1zM615,453h1v1h-1zM615,458h1v1h-1zM615,463h1v1h-1zM615,468h1v1h-1zM615,473h1v1h-1zM615,478h1v1h-1zM615,483h1v1h-1zM615,488h1v1h-1zM615,493h1v1h-1zM615,498h1v1h-1zM615,503h1v1h-1zM619,413h1v1h-1zM619,418h1v1h-1zM619,423h1v1h-1zM619,428h1v1h-1zM619,433h1v1h-1zM619,438h1v1h-1zM619,443h1v1h-1zM619,448h1v1h-1zM619,453h1v1h-1zM619,458h1v1h-1zM619,463h1v1h-1zM619,468h1v1h-1zM619,473h1v1h-1zM619,478h1v1h-1zM619,483h1v1h-1zM619,488h1v1h-1zM619,493h1v1h-1zM619,498h1v1h-1zM619,503h1v1h-1zM623,412h1v1h-1zM623,417h1v1h-1zM623,422h1v1h-1zM623,427h1v1h-1zM623,432h1v1h-1zM623,437h1v1h-1zM623,442h1v1h-1zM623,447h1v1h-1zM623,452h1v1h-1zM623,457h1v1h-1zM623,462h1v1h-1zM623,467h1v1h-1zM623,472h1v1h-1zM623,477h1v1h-1zM623,482h1v1h-1zM623,487h1v1h-1zM623,492h1v1h-1zM623,497h1v1h-1zM623,502h1v1h-1zM627,411h1v1h-1zM627,416h1v1h-1zM627,421h1v1h-1zM627,426h1v1h-1zM627,431h1v1h-1zM627,436h1v1h-1zM627,441h1v1h-1zM627,446h1v1h-1zM627,451h1v1h-1zM627,456h1v1h-1zM627,461h1v1h-1zM627,466h1v1h-1zM627,471h1v1h-1zM627,476h1v1h-1zM627,481h1v1h-1zM627,486h1v1h-1zM627,491h1v1h-1zM627,496h1v1h-1zM627,501h1v1h-1zM631,411h1v1h-1zM631,416h1v1h-1zM631,421h1v1h-1zM631,426h1v1h-1zM631,431h1v1h-1zM631,436h1v1h-1zM631,441h1v1h-1zM631,446h1v1h-1zM631,451h1v1h-1zM631,456h1v1h-1zM631,461h1v1h-1zM631,466h1v1h-1zM631,471h1v1h-1zM631,476h1v1h-1zM631,481h1v1h-1zM631,486h1v1h-1zM631,491h1v1h-1zM631,496h1v1h-1zM631,501h1v1h-1zM635,410h1v1h-1zM635,415h1v1h-1zM635,420h1v1h-1zM635,425h1v1h-1zM635,430h1v1h-1zM635,435h1v1h-1zM635,440h1v1h-1zM635,445h1v1h-1zM635,450h1v1h-1zM635,455h1v1h-1zM635,460h1v1h-1zM635,465h1v1h-1zM635,470h1v1h-1zM635,475h1v1h-1zM635,480h1v1h-1zM635,485h1v1h-1zM635,490h1v1h-1zM635,495h1v1h-1zM635,500h1v1h-1zM639,409h1v1h-1zM639,414h1v1h-1zM639,419h1v1h-1zM639,424h1v1h-1zM639,429h1v1h-1zM639,434h1v1h-1zM639,439h1v1h-1zM639,444h1v1h-1zM639,449h1v1h-1zM639,454h1v1h-1zM639,459h1v1h-1zM639,464h1v1h-1zM639,469h1v1h-1zM639,474h1v1h-1zM639,479h1v1h-1zM639,484h1v1h-1zM639,489h1v1h-1zM639,494h1v1h-1zM639,499h1v1h-1zM643,409h1v1h-1zM643,414h1v1h-1zM643,419h1v1h-1zM643,424h1v1h-1zM643,429h1v1h-1zM643,434h1v1h-1zM643,439h1v1h-1zM643,444h1v1h-1zM643,449h1v1h-1zM643,454h1v1h-1zM643,459h1v1h-1zM643,464h1v1h-1zM643,469h1v1h-1zM643,474h1v1h-1zM643,479h1v1h-1zM643,484h1v1h-1zM643,489h1v1h-1zM643,494h1v1h-1zM643,499h1v1h-1zM644,406h1v1h-1zM644,411h1v1h-1zM644,416h1v1h-1zM644,421h1v1h-1zM644,426h1v1h-1zM644,431h1v1h-1zM644,436h1v1h-1zM644,441h1v1h-1zM644,446h1v1h-1zM644,451h1v1h-1zM644,456h1v1h-1zM644,461h1v1h-1zM644,466h1v1h-1zM644,471h1v1h-1zM644,476h1v1h-1zM644,481h1v1h-1zM644,486h1v1h-1zM644,491h1v1h-1zM644,496h1v1h-1zM644,501h1v1h-1zM648,408h1v1h-1zM648,413h1v1h-1zM648,418h1v1h-1zM648,423h1v1h-1zM648,428h1v1h-1zM648,433h1v1h-1zM648,438h1v1h-1zM648,443h1v1h-1zM648,448h1v1h-1zM648,453h1v1h-1zM648,458h1v1h-1zM648,463h1v1h-1zM648,468h1v1h-1zM648,473h1v1h-1zM648,478h1v1h-1zM648,483h1v1h-1zM648,488h1v1h-1zM648,493h1v1h-1zM648,498h1v1h-1zM648,503h1v1h-1zM652,411h1v1h-1zM652,416h1v1h-1zM652,421h1v1h-1zM652,426h1v1h-1zM652,431h1v1h-1zM652,436h1v1h-1zM652,441h1v1h-1zM652,446h1v1h-1zM652,451h1v1h-1zM652,456h1v1h-1zM652,461h1v1h-1zM652,466h1v1h-1zM652,471h1v1h-1zM652,476h1v1h-1zM652,481h1v1h-1zM652,486h1v1h-1zM652,491h1v1h-1zM652,496h1v1h-1zM652,501h1v1h-1zM656,413h1v1h-1zM656,418h1v1h-1zM656,423h1v1h-1zM656,428h1v1h-1zM656,433h1v1h-1zM656,438h1v1h-1zM656,443h1v1h-1zM656,448h1v1h-1zM656,453h1v1h-1zM656,458h1v1h-1zM656,463h1v1h-1zM656,468h1v1h-1zM656,473h1v1h-1zM656,478h1v1h-1zM656,483h1v1h-1zM656,488h1v1h-1zM656,493h1v1h-1zM656,498h1v1h-1zM656,503h1v1h-1zM660,415h1v1h-1zM660,420h1v1h-1zM660,425h1v1h-1zM660,430h1v1h-1zM660,435h1v1h-1zM660,440h1v1h-1zM660,445h1v1h-1zM660,450h1v1h-1zM660,455h1v1h-1zM660,460h1v1h-1zM660,465h1v1h-1zM660,470h1v1h-1zM660,475h1v1h-1zM660,480h1v1h-1zM660,485h1v1h-1zM660,490h1v1h-1zM660,495h1v1h-1zM660,500h1v1h-1zM660,505h1v1h-1zM664,417h1v1h-1zM664,422h1v1h-1zM664,427h1v1h-1zM664,432h1v1h-1zM664,437h1v1h-1zM664,442h1v1h-1zM664,447h1v1h-1zM664,452h1v1h-1zM664,457h1v1h-1zM664,462h1v1h-1zM664,467h1v1h-1zM664,472h1v1h-1zM664,477h1v1h-1zM664,482h1v1h-1zM664,487h1v1h-1zM664,492h1v1h-1zM664,497h1v1h-1zM664,502h1v1h-1zM664,507h1v1h-1zM664,512h1v1h-1zM668,419h1v1h-1zM668,424h1v1h-1zM668,429h1v1h-1zM668,434h1v1h-1zM668,439h1v1h-1zM668,444h1v1h-1zM668,449h1v1h-1zM668,454h1v1h-1zM668,459h1v1h-1zM668,464h1v1h-1zM668,469h1v1h-1zM668,474h1v1h-1zM668,479h1v1h-1zM668,484h1v1h-1zM668,489h1v1h-1zM668,494h1v1h-1zM668,499h1v1h-1zM668,504h1v1h-1zM668,509h1v1h-1zM668,514h1v1h-1zM672,422h1v1h-1zM672,427h1v1h-1zM672,432h1v1h-1zM672,437h1v1h-1zM672,442h1v1h-1zM672,447h1v1h-1zM672,452h1v1h-1zM672,457h1v1h-1zM672,462h1v1h-1zM672,467h1v1h-1zM672,472h1v1h-1zM672,477h1v1h-1zM672,482h1v1h-1zM672,487h1v1h-1zM672,492h1v1h-1zM672,497h1v1h-1zM672,502h1v1h-1zM672,507h1v1h-1zM672,512h1v1h-1zM676,424h1v1h-1zM676,429h1v1h-1zM676,434h1v1h-1zM676,439h1v1h-1zM676,444h1v1h-1zM676,449h1v1h-1zM676,454h1v1h-1zM676,459h1v1h-1zM676,464h1v1h-1zM676,469h1v1h-1zM676,474h1v1h-1zM676,479h1v1h-1zM676,484h1v1h-1zM676,489h1v1h-1zM676,494h1v1h-1zM676,499h1v1h-1zM676,504h1v1h-1zM676,509h1v1h-1zM676,514h1v1h-1zM680,426h1v1h-1zM680,431h1v1h-1zM680,436h1v1h-1zM680,441h1v1h-1zM680,446h1v1h-1zM680,451h1v1h-1zM680,456h1v1h-1zM680,461h1v1h-1zM680,466h1v1h-1zM680,471h1v1h-1zM680,476h1v1h-1zM680,481h1v1h-1zM680,486h1v1h-1zM680,491h1v1h-1zM680,496h1v1h-1zM680,501h1v1h-1zM680,506h1v1h-1zM680,511h1v1h-1zM680,516h1v1h-1zM684,428h1v1h-1zM684,433h1v1h-1zM684,438h1v1h-1zM684,443h1v1h-1zM684,448h1v1h-1zM684,453h1v1h-1zM684,458h1v1h-1zM684,463h1v1h-1zM684,468h1v1h-1zM684,473h1v1h-1zM684,478h1v1h-1zM684,483h1v1h-1zM684,488h1v1h-1zM684,493h1v1h-1zM684,498h1v1h-1zM684,503h1v1h-1zM684,508h1v1h-1zM684,513h1v1h-1zM684,518h1v1h-1zM688,430h1v1h-1zM688,435h1v1h-1zM688,440h1v1h-1zM688,445h1v1h-1zM688,450h1v1h-1zM688,455h1v1h-1zM688,460h1v1h-1zM688,465h1v1h-1zM688,470h1v1h-1zM688,475h1v1h-1zM688,480h1v1h-1zM688,485h1v1h-1zM688,490h1v1h-1zM688,495h1v1h-1zM688,500h1v1h-1zM688,505h1v1h-1zM688,510h1v1h-1zM688,515h1v1h-1zM688,520h1v1h-1zM692,433h1v1h-1zM692,438h1v1h-1zM692,443h1v1h-1zM692,448h1v1h-1zM692,453h1v1h-1zM692,458h1v1h-1zM692,463h1v1h-1zM692,468h1v1h-1zM692,473h1v1h-1zM692,478h1v1h-1zM692,483h1v1h-1zM692,488h1v1h-1zM692,493h1v1h-1zM692,498h1v1h-1zM692,503h1v1h-1zM692,508h1v1h-1zM692,513h1v1h-1zM692,518h1v1h-1zM692,523h1v1h-1zM696,435h1v1h-1zM696,440h1v1h-1zM696,445h1v1h-1zM696,450h1v1h-1zM696,455h1v1h-1zM696,460h1v1h-1zM696,465h1v1h-1zM696,470h1v1h-1zM696,475h1v1h-1zM696,480h1v1h-1zM696,485h1v1h-1zM696,490h1v1h-1zM696,495h1v1h-1zM696,500h1v1h-1zM696,505h1v1h-1zM696,510h1v1h-1zM696,515h1v1h-1zM696,520h1v1h-1zM696,525h1v1h-1zM700,437h1v1h-1zM700,442h1v1h-1zM700,447h1v1h-1zM700,452h1v1h-1zM700,457h1v1h-1zM700,462h1v1h-1zM700,467h1v1h-1zM700,472h1v1h-1zM700,477h1v1h-1zM700,482h1v1h-1zM700,487h1v1h-1zM700,492h1v1h-1zM700,497h1v1h-1zM700,502h1v1h-1zM700,507h1v1h-1zM700,512h1v1h-1zM700,517h1v1h-1zM700,522h1v1h-1zM700,527h1v1h-1zM704,439h1v1h-1zM704,444h1v1h-1zM704,449h1v1h-1zM704,454h1v1h-1zM704,459h1v1h-1zM704,464h1v1h-1zM704,469h1v1h-1zM704,474h1v1h-1zM704,479h1v1h-1zM704,484h1v1h-1zM704,489h1v1h-1zM704,494h1v1h-1zM704,499h1v1h-1zM704,504h1v1h-1zM704,509h1v1h-1zM704,514h1v1h-1zM704,519h1v1h-1zM704,524h1v1h-1zM704,529h1v1h-1zM708,441h1v1h-1zM708,446h1v1h-1zM708,451h1v1h-1zM708,456h1v1h-1zM708,461h1v1h-1zM708,466h1v1h-1zM708,471h1v1h-1zM708,476h1v1h-1zM708,481h1v1h-1zM708,486h1v1h-1zM708,491h1v1h-1zM708,496h1v1h-1zM708,501h1v1h-1zM708,506h1v1h-1zM708,511h1v1h-1zM708,516h1v1h-1zM708,521h1v1h-1zM708,526h1v1h-1zM708,531h1v1h-1zM712,444h1v1h-1zM712,449h1v1h-1zM712,454h1v1h-1zM712,459h1v1h-1zM712,464h1v1h-1zM712,469h1v1h-1zM712,474h1v1h-1zM712,479h1v1h-1zM712,484h1v1h-1zM712,489h1v1h-1zM712,494h1v1h-1zM712,499h1v1h-1zM712,504h1v1h-1zM712,509h1v1h-1zM712,514h1v1h-1zM712,519h1v1h-1zM712,524h1v1h-1zM712,529h1v1h-1zM712,534h1v1h-1zM716,446h1v1h-1zM716,451h1v1h-1zM716,456h1v1h-1zM716,461h1v1h-1zM716,466h1v1h-1zM716,471h1v1h-1zM716,476h1v1h-1zM716,481h1v1h-1zM716,486h1v1h-1zM716,491h1v1h-1zM716,496h1v1h-1zM716,501h1v1h-1zM716,506h1v1h-1zM716,511h1v1h-1zM716,516h1v1h-1zM716,521h1v1h-1zM716,526h1v1h-1zM716,531h1v1h-1zM716,536h1v1h-1zM720,448h1v1h-1zM720,453h1v1h-1zM720,458h1v1h-1zM720,463h1v1h-1zM720,468h1v1h-1zM720,473h1v1h-1zM720,478h1v1h-1zM720,483h1v1h-1zM720,488h1v1h-1zM720,493h1v1h-1zM720,498h1v1h-1zM720,503h1v1h-1zM720,508h1v1h-1zM720,513h1v1h-1zM720,518h1v1h-1zM720,523h1v1h-1zM720,528h1v1h-1zM720,533h1v1h-1zM720,538h1v1h-1zM724,450h1v1h-1zM724,455h1v1h-1zM724,460h1v1h-1zM724,465h1v1h-1zM724,470h1v1h-1zM724,475h1v1h-1zM724,480h1v1h-1zM724,485h1v1h-1zM724,490h1v1h-1zM724,495h1v1h-1zM724,500h1v1h-1zM724,505h1v1h-1zM724,510h1v1h-1zM724,515h1v1h-1zM724,520h1v1h-1zM724,525h1v1h-1zM724,530h1v1h-1zM724,535h1v1h-1zM724,540h1v1h-1zM728,452h1v1h-1zM728,457h1v1h-1zM728,462h1v1h-1zM728,467h1v1h-1zM728,472h1v1h-1zM728,477h1v1h-1zM728,482h1v1h-1zM728,487h1v1h-1zM728,492h1v1h-1zM728,497h1v1h-1zM728,502h1v1h-1zM728,507h1v1h-1zM728,512h1v1h-1zM728,517h1v1h-1zM728,522h1v1h-1zM728,527h1v1h-1zM728,532h1v1h-1zM728,537h1v1h-1zM728,542h1v1h-1zM732,455h1v1h-1zM732,460h1v1h-1zM732,465h1v1h-1zM732,470h1v1h-1zM732,475h1v1h-1zM732,480h1v1h-1zM732,485h1v1h-1zM732,490h1v1h-1zM732,495h1v1h-1zM732,500h1v1h-1zM732,505h1v1h-1zM732,510h1v1h-1zM732,515h1v1h-1zM732,520h1v1h-1zM732,525h1v1h-1zM732,530h1v1h-1zM732,535h1v1h-1zM732,540h1v1h-1zM732,545h1v1h-1zM736,457h1v1h-1zM736,462h1v1h-1zM736,467h1v1h-1zM736,472h1v1h-1zM736,477h1v1h-1zM736,482h1v1h-1zM736,487h1v1h-1zM736,492h1v1h-1zM736,497h1v1h-1zM736,502h1v1h-1zM736,507h1v1h-1zM736,512h1v1h-1zM736,517h1v1h-1zM736,522h1v1h-1zM736,527h1v1h-1zM736,532h1v1h-1zM736,537h1v1h-1zM736,542h1v1h-1zM736,547h1v1h-1zM740,459h1v1h-1zM740,464h1v1h-1zM740,469h1v1h-1zM740,474h1v1h-1zM740,479h1v1h-1zM740,484h1v1h-1zM740,489h1v1h-1zM740,494h1v1h-1zM740,499h1v1h-1zM740,504h1v1h-1zM740,509h1v1h-1zM740,514h1v1h-1zM740,519h1v1h-1zM740,524h1v1h-1zM740,529h1v1h-1zM740,534h1v1h-1zM740,539h1v1h-1zM740,544h1v1h-1zM740,549h1v1h-1zM744,461h1v1h-1zM744,466h1v1h-1zM744,471h1v1h-1zM744,476h1v1h-1zM744,481h1v1h-1zM744,486h1v1h-1zM744,491h1v1h-1zM744,496h1v1h-1zM744,501h1v1h-1zM744,506h1v1h-1zM744,511h1v1h-1zM744,516h1v1h-1zM744,521h1v1h-1zM744,526h1v1h-1zM744,531h1v1h-1zM744,536h1v1h-1zM744,541h1v1h-1zM744,546h1v1h-1zM744,551h1v1h-1zM748,463h1v1h-1zM748,468h1v1h-1zM748,473h1v1h-1zM748,478h1v1h-1zM748,483h1v1h-1zM748,488h1v1h-1zM748,493h1v1h-1zM748,498h1v1h-1zM748,503h1v1h-1zM748,508h1v1h-1zM748,513h1v1h-1zM748,518h1v1h-1zM748,523h1v1h-1zM748,528h1v1h-1zM748,533h1v1h-1zM748,538h1v1h-1zM748,543h1v1h-1zM748,548h1v1h-1zM748,553h1v1h-1z" fill="#000"/>
<clipPath id="floor"><polygon points="459,533 644,502 751,557 566,588"/></clipPath>
<g clip-path="url(#floor)" shape-rendering="crispEdges">
<polygon points="459,533 644,502 751,557 566,588" fill="#000"/>
<path d="M453.45,533.93 l107,55 M457.15,533.31 l107,55 M460.85,532.69 l107,55 M464.55,532.07 l107,55 M468.25,531.45 l107,55 M471.95,530.83 l107,55 M475.65,530.21 l107,55 M479.35,529.59 l107,55 M483.05,528.97 l107,55 M486.75,528.35 l107,55 M490.45,527.73 l107,55 M494.15,527.11 l107,55 M497.85,526.49 l107,55 M501.55,525.87 l107,55 M505.25,525.25 l107,55 M508.95,524.63 l107,55 M512.65,524.01 l107,55 M516.35,523.39 l107,55 M520.05,522.77 l107,55 M523.75,522.15 l107,55 M527.45,521.53 l107,55 M531.15,520.91 l107,55 M534.85,520.29 l107,55 M538.55,519.67 l107,55 M542.25,519.05 l107,55 M545.95,518.43 l107,55 M549.65,517.81 l107,55 M553.35,517.19 l107,55 M557.05,516.57 l107,55 M560.75,515.95 l107,55 M564.45,515.33 l107,55 M568.15,514.71 l107,55 M571.85,514.09 l107,55 M575.55,513.47 l107,55 M579.25,512.85 l107,55 M582.95,512.23 l107,55 M586.65,511.61 l107,55 M590.35,510.99 l107,55 M594.05,510.37 l107,55 M597.75,509.75 l107,55 M601.45,509.13 l107,55 M605.15,508.51 l107,55 M608.85,507.89 l107,55 M612.55,507.27 l107,55 M616.25,506.65 l107,55 M619.95,506.03 l107,55 M623.65,505.41 l107,55 M627.35,504.79 l107,55 M631.05,504.17 l107,55 M634.75,503.55 l107,55 M638.45,502.93 l107,55 M642.15,502.31 l107,55 M645.85,501.69 l107,55 M649.55,501.07 l107,55" stroke="#fff" stroke-width="1" stroke-dasharray="3.4 1.7" fill="none"/>
</g>
<line x1="459.5" y1="425.5" x2="644.5" y2="392.5" stroke="#000" stroke-width="1"/>
<line x1="644.5" y1="392.5" x2="751.5" y2="447.5" stroke="#000" stroke-width="1"/>
<line x1="751.5" y1="447.5" x2="566.5" y2="480.5" stroke="#000" stroke-width="1"/>
<line x1="566.5" y1="480.5" x2="459.5" y2="425.5" stroke="#000" stroke-width="1"/>
<line x1="459.5" y1="425.5" x2="459.5" y2="533.5" stroke="#000" stroke-width="1"/>
<line x1="751.5" y1="447.5" x2="751.5" y2="557.5" stroke="#000" stroke-width="1"/>
<line x1="644.5" y1="392.5" x2="644.5" y2="502.5" stroke="#000" stroke-width="1"/>
<line x1="566.5" y1="480.5" x2="566.5" y2="588.5" stroke="#000" stroke-width="1"/>
<line x1="459.5" y1="533.5" x2="566.5" y2="588.5" stroke="#000" stroke-width="1"/>
<line x1="566.5" y1="588.5" x2="751.5" y2="557.5" stroke="#000" stroke-width="1"/>
<polygon points="473,486 475,484 480,484 480,536 473,536" fill="#fff"/>
<rect x="473" y="486" width="1" height="51" fill="#000"/>
<rect x="475" y="486" width="1" height="51" fill="#000"/>
<rect x="480" y="485" width="1" height="52" fill="#000"/>
<rect x="473" y="536" width="8" height="1" fill="#000"/>
<rect x="475" y="484" width="6" height="1" fill="#000"/>
<rect x="473" y="486" width="3" height="1" fill="#000"/>
<rect x="474" y="485" width="1" height="1" fill="#000"/>
<polygon points="486,453 488,451 493,451 493,542 486,542" fill="#fff"/>
<rect x="486" y="453" width="1" height="90" fill="#000"/>
<rect x="489" y="453" width="1" height="90" fill="#000"/>
<rect x="493" y="452" width="1" height="91" fill="#000"/>
<rect x="486" y="542" width="8" height="1" fill="#000"/>
<rect x="488" y="451" width="6" height="1" fill="#000"/>
<rect x="486" y="453" width="4" height="1" fill="#000"/>
<rect x="487" y="452" width="1" height="1" fill="#000"/>
<polygon points="500,451 502,449 507,449 507,550 500,550" fill="#fff"/>
<rect x="500" y="451" width="1" height="100" fill="#000"/>
<rect x="503" y="451" width="1" height="100" fill="#000"/>
<rect x="507" y="450" width="1" height="101" fill="#000"/>
<rect x="500" y="550" width="8" height="1" fill="#000"/>
<rect x="502" y="449" width="6" height="1" fill="#000"/>
<rect x="500" y="451" width="4" height="1" fill="#000"/>
<rect x="501" y="450" width="1" height="1" fill="#000"/>
<polygon points="513,474 515,472 520,472 520,557 513,557" fill="#fff"/>
<rect x="513" y="474" width="1" height="84" fill="#000"/>
<rect x="516" y="474" width="1" height="84" fill="#000"/>
<rect x="520" y="473" width="1" height="85" fill="#000"/>
<rect x="513" y="557" width="8" height="1" fill="#000"/>
<rect x="515" y="472" width="6" height="1" fill="#000"/>
<rect x="513" y="474" width="4" height="1" fill="#000"/>
<rect x="514" y="473" width="1" height="1" fill="#000"/>
<polygon points="527,507 529,505 534,505 534,564 527,564" fill="#fff"/>
<rect x="527" y="507" width="1" height="58" fill="#000"/>
<rect x="530" y="507" width="1" height="58" fill="#000"/>
<rect x="534" y="506" width="1" height="59" fill="#000"/>
<rect x="527" y="564" width="8" height="1" fill="#000"/>
<rect x="529" y="505" width="6" height="1" fill="#000"/>
<rect x="527" y="507" width="4" height="1" fill="#000"/>
<rect x="528" y="506" width="1" height="1" fill="#000"/>
<polygon points="540,545 542,543 548,543 548,570 540,570" fill="#fff"/>
<rect x="540" y="545" width="1" height="26" fill="#000"/>
<rect x="543" y="545" width="1" height="26" fill="#000"/>
<rect x="548" y="544" width="1" height="27" fill="#000"/>
<rect x="540" y="570" width="9" height="1" fill="#000"/>
<rect x="542" y="543" width="7" height="1" fill="#000"/>
<rect x="540" y="545" width="4" height="1" fill="#000"/>
<rect x="541" y="544" width="1" height="1" fill="#000"/>
<polygon points="567,569 569,567 574,567 574,584 567,584" fill="#fff"/>
<rect x="567" y="569" width="1" height="16" fill="#000"/>
<rect x="570" y="569" width="1" height="16" fill="#000"/>
<rect x="574" y="568" width="1" height="17" fill="#000"/>
<rect x="567" y="584" width="8" height="1" fill="#000"/>
<rect x="569" y="567" width="6" height="1" fill="#000"/>
<rect x="567" y="569" width="4" height="1" fill="#000"/>
<rect x="568" y="568" width="1" height="1" fill="#000"/>
<polygon points="613,564 615,562 620,562 620,577 613,577" fill="#fff"/>
<rect x="613" y="564" width="1" height="14" fill="#000"/>
<rect x="616" y="564" width="1" height="14" fill="#000"/>
<rect x="620" y="563" width="1" height="15" fill="#000"/>
<rect x="613" y="577" width="8" height="1" fill="#000"/>
<rect x="615" y="562" width="6" height="1" fill="#000"/>
<rect x="613" y="564" width="4" height="1" fill="#000"/>
<rect x="614" y="563" width="1" height="1" fill="#000"/>
<polygon points="637,552 639,550 644,550 644,573 637,573" fill="#fff"/>
<rect x="637" y="552" width="1" height="22" fill="#000"/>
<rect x="640" y="552" width="1" height="22" fill="#000"/>
<rect x="644" y="551" width="1" height="23" fill="#000"/>
<rect x="637" y="573" width="8" height="1" fill="#000"/>
<rect x="639" y="550" width="6" height="1" fill="#000"/>
<rect x="637" y="552" width="4" height="1" fill="#000"/>
<rect x="638" y="551" width="1" height="1" fill="#000"/>
<polygon points="661,543 663,541 667,541 667,569 661,569" fill="#fff"/>
<rect x="661" y="543" width="1" height="27" fill="#000"/>
<rect x="664" y="543" width="1" height="27" fill="#000"/>
<rect x="667" y="542" width="1" height="28" fill="#000"/>
<rect x="661" y="569" width="7" height="1" fill="#000"/>
<rect x="663" y="541" width="5" height="1" fill="#000"/>
<rect x="661" y="543" width="4" height="1" fill="#000"/>
<rect x="662" y="542" width="1" height="1" fill="#000"/>
<polygon points="684,534 686,532 690,532 690,564 684,564" fill="#fff"/>
<rect x="684" y="534" width="1" height="31" fill="#000"/>
<rect x="687" y="534" width="1" height="31" fill="#000"/>
<rect x="690" y="533" width="1" height="32" fill="#000"/>
<rect x="684" y="564" width="7" height="1" fill="#000"/>
<rect x="686" y="532" width="5" height="1" fill="#000"/>
<rect x="684" y="534" width="4" height="1" fill="#000"/>
<rect x="685" y="533" width="1" height="1" fill="#000"/>
<polygon points="706,529 708,527 713,527 713,560 706,560" fill="#fff"/>
<rect x="706" y="529" width="1" height="32" fill="#000"/>
<rect x="709" y="529" width="1" height="32" fill="#000"/>
<rect x="713" y="528" width="1" height="33" fill="#000"/>
<rect x="706" y="560" width="8" height="1" fill="#000"/>
<rect x="708" y="527" width="6" height="1" fill="#000"/>
<rect x="706" y="529" width="4" height="1" fill="#000"/>
<rect x="707" y="528" width="1" height="1" fill="#000"/>
<polygon points="729,535 731,533 736,533 736,556 729,556" fill="#fff"/>
<rect x="729" y="535" width="1" height="22" fill="#000"/>
<rect x="732" y="535" width="1" height="22" fill="#000"/>
<rect x="736" y="534" width="1" height="23" fill="#000"/>
<rect x="729" y="556" width="8" height="1" fill="#000"/>
<rect x="731" y="533" width="6" height="1" fill="#000"/>
<rect x="729" y="535" width="4" height="1" fill="#000"/>
<rect x="730" y="534" width="1" height="1" fill="#000"/>
<rect x="590" y="509" width="7" height="6" fill="#000"/>
<rect x="591" y="510" width="5" height="4" fill="#fff"/>
<rect x="592" y="511" width="1" height="3" fill="#000"/>
<rect x="579" y="520" width="7" height="6" fill="#000"/>
<rect x="580" y="521" width="5" height="4" fill="#fff"/>
<rect x="581" y="522" width="1" height="3" fill="#000"/>
<rect x="569" y="531" width="7" height="6" fill="#000"/>
<rect x="570" y="532" width="5" height="4" fill="#fff"/>
<rect x="571" y="533" width="1" height="3" fill="#000"/>
<rect x="663" y="514" width="7" height="6" fill="#000"/>
<rect x="664" y="515" width="5" height="4" fill="#fff"/>
<rect x="665" y="516" width="1" height="3" fill="#000"/>
<rect x="653" y="525" width="7" height="6" fill="#000"/>
<rect x="654" y="526" width="5" height="4" fill="#fff"/>
<rect x="655" y="527" width="1" height="3" fill="#000"/>
<rect x="557" y="525" width="7" height="6" fill="#000"/>
<rect x="558" y="526" width="5" height="4" fill="#fff"/>
<rect x="559" y="527" width="1" height="3" fill="#000"/>
<rect x="644" y="537" width="7" height="6" fill="#000"/>
<rect x="645" y="538" width="5" height="4" fill="#fff"/>
<rect x="646" y="539" width="1" height="3" fill="#000"/>
<text x="455" y="535" font-size="9" font-weight="bold" text-anchor="end" fill="#000" textLength="5" lengthAdjust="spacingAndGlyphs" stroke="#000" stroke-width="0.35" filter="url(#crisp)">0</text>
<text x="455" y="522" font-size="9" font-weight="bold" text-anchor="end" fill="#000" textLength="15" lengthAdjust="spacingAndGlyphs" stroke="#000" stroke-width="0.35" filter="url(#crisp)">500</text>
<text x="455" y="508" font-size="9" font-weight="bold" text-anchor="end" fill="#000" textLength="20" lengthAdjust="spacingAndGlyphs" stroke="#000" stroke-width="0.35" filter="url(#crisp)">1000</text>
<text x="455" y="494" font-size="9" font-weight="bold" text-anchor="end" fill="#000" textLength="20" lengthAdjust="spacingAndGlyphs" stroke="#000" stroke-width="0.35" filter="url(#crisp)">1500</text>
<text x="455" y="481" font-size="9" font-weight="bold" text-anchor="end" fill="#000" textLength="20" lengthAdjust="spacingAndGlyphs" stroke="#000" stroke-width="0.35" filter="url(#crisp)">2000</text>
<text x="455" y="468" font-size="9" font-weight="bold" text-anchor="end" fill="#000" textLength="20" lengthAdjust="spacingAndGlyphs" stroke="#000" stroke-width="0.35" filter="url(#crisp)">2500</text>
<text x="455" y="454" font-size="9" font-weight="bold" text-anchor="end" fill="#000" textLength="20" lengthAdjust="spacingAndGlyphs" stroke="#000" stroke-width="0.35" filter="url(#crisp)">3000</text>
<text x="455" y="440" font-size="9" font-weight="bold" text-anchor="end" fill="#000" textLength="20" lengthAdjust="spacingAndGlyphs" stroke="#000" stroke-width="0.35" filter="url(#crisp)">3500</text>
<text x="455" y="427" font-size="9" font-weight="bold" text-anchor="end" fill="#000" textLength="20" lengthAdjust="spacingAndGlyphs" stroke="#000" stroke-width="0.35" filter="url(#crisp)">4000</text>
<rect x="452" y="533" width="7" height="1" fill="#000"/>
<rect x="455" y="530" width="4" height="1" fill="#000"/>
<rect x="455" y="528" width="4" height="1" fill="#000"/>
<rect x="455" y="525" width="4" height="1" fill="#000"/>
<rect x="455" y="522" width="4" height="1" fill="#000"/>
<rect x="452" y="520" width="7" height="1" fill="#000"/>
<rect x="455" y="517" width="4" height="1" fill="#000"/>
<rect x="455" y="514" width="4" height="1" fill="#000"/>
<rect x="455" y="511" width="4" height="1" fill="#000"/>
<rect x="455" y="509" width="4" height="1" fill="#000"/>
<rect x="452" y="506" width="7" height="1" fill="#000"/>
<rect x="455" y="503" width="4" height="1" fill="#000"/>
<rect x="455" y="501" width="4" height="1" fill="#000"/>
<rect x="455" y="498" width="4" height="1" fill="#000"/>
<rect x="455" y="495" width="4" height="1" fill="#000"/>
<rect x="452" y="492" width="7" height="1" fill="#000"/>
<rect x="455" y="490" width="4" height="1" fill="#000"/>
<rect x="455" y="487" width="4" height="1" fill="#000"/>
<rect x="455" y="484" width="4" height="1" fill="#000"/>
<rect x="455" y="482" width="4" height="1" fill="#000"/>
<rect x="452" y="479" width="7" height="1" fill="#000"/>
<rect x="455" y="476" width="4" height="1" fill="#000"/>
<rect x="455" y="474" width="4" height="1" fill="#000"/>
<rect x="455" y="471" width="4" height="1" fill="#000"/>
<rect x="455" y="468" width="4" height="1" fill="#000"/>
<rect x="452" y="466" width="7" height="1" fill="#000"/>
<rect x="455" y="463" width="4" height="1" fill="#000"/>
<rect x="455" y="460" width="4" height="1" fill="#000"/>
<rect x="455" y="457" width="4" height="1" fill="#000"/>
<rect x="455" y="455" width="4" height="1" fill="#000"/>
<rect x="452" y="452" width="7" height="1" fill="#000"/>
<rect x="455" y="449" width="4" height="1" fill="#000"/>
<rect x="455" y="447" width="4" height="1" fill="#000"/>
<rect x="455" y="444" width="4" height="1" fill="#000"/>
<rect x="455" y="441" width="4" height="1" fill="#000"/>
<rect x="452" y="438" width="7" height="1" fill="#000"/>
<rect x="455" y="436" width="4" height="1" fill="#000"/>
<rect x="455" y="433" width="4" height="1" fill="#000"/>
<rect x="455" y="430" width="4" height="1" fill="#000"/>
<rect x="455" y="428" width="4" height="1" fill="#000"/>
<rect x="452" y="425" width="7" height="1" fill="#000"/>
<text x="460.4" y="550" font-size="14" font-weight="bold" text-anchor="middle" fill="#000" textLength="8" lengthAdjust="spacingAndGlyphs" filter="url(#thin)">6</text>
<text x="473.6" y="556.6" font-size="14" font-weight="bold" text-anchor="middle" fill="#000" textLength="8" lengthAdjust="spacingAndGlyphs" filter="url(#thin)">5</text>
<text x="487.2" y="563.6" font-size="14" font-weight="bold" text-anchor="middle" fill="#000" textLength="8" lengthAdjust="spacingAndGlyphs" filter="url(#thin)">4</text>
<text x="500" y="570.2" font-size="14" font-weight="bold" text-anchor="middle" fill="#000" textLength="8" lengthAdjust="spacingAndGlyphs" filter="url(#thin)">3</text>
<text x="513.2" y="577" font-size="14" font-weight="bold" text-anchor="middle" fill="#000" textLength="8" lengthAdjust="spacingAndGlyphs" filter="url(#thin)">2</text>
<text x="529.7" y="584.2" font-size="14" font-weight="bold" text-anchor="middle" fill="#000" textLength="8" lengthAdjust="spacingAndGlyphs" filter="url(#thin)">1</text>
<text x="540" y="590.4" font-size="14" font-weight="bold" text-anchor="middle" fill="#000" textLength="8" lengthAdjust="spacingAndGlyphs" filter="url(#thin)">0</text>
<text x="552.1" y="597.4" font-size="14" font-weight="bold" text-anchor="middle" fill="#000" textLength="15" lengthAdjust="spacingAndGlyphs" filter="url(#thin)">-1</text>
<text x="576" y="598.4" font-size="14" font-weight="bold" text-anchor="middle" fill="#000" textLength="15" lengthAdjust="spacingAndGlyphs" filter="url(#thin)">-1</text>
<text x="599" y="596" font-size="14" font-weight="bold" text-anchor="middle" fill="#000" textLength="8" lengthAdjust="spacingAndGlyphs" filter="url(#thin)">0</text>
<text x="624.6" y="592.4" font-size="14" font-weight="bold" text-anchor="middle" fill="#000" textLength="8" lengthAdjust="spacingAndGlyphs" filter="url(#thin)">1</text>
<text x="646.3" y="587.8" font-size="14" font-weight="bold" text-anchor="middle" fill="#000" textLength="8" lengthAdjust="spacingAndGlyphs" filter="url(#thin)">2</text>
<text x="669" y="584" font-size="14" font-weight="bold" text-anchor="middle" fill="#000" textLength="8" lengthAdjust="spacingAndGlyphs" filter="url(#thin)">3</text>
<text x="692" y="579.6" font-size="14" font-weight="bold" text-anchor="middle" fill="#000" textLength="8" lengthAdjust="spacingAndGlyphs" filter="url(#thin)">4</text>
<text x="715.3" y="576" font-size="14" font-weight="bold" text-anchor="middle" fill="#000" textLength="8" lengthAdjust="spacingAndGlyphs" filter="url(#thin)">5</text>
<text x="738" y="571.4" font-size="14" font-weight="bold" text-anchor="middle" fill="#000" textLength="8" lengthAdjust="spacingAndGlyphs" filter="url(#thin)">6</text>
<rect x="425" y="369" width="221" height="30" fill="#fff"/>
<rect x="425" y="398" width="221" height="1" fill="#000"/>
<rect x="425" y="369" width="1" height="30" fill="#000"/>
<rect x="645" y="369" width="1" height="30" fill="#000"/>
<rect x="646" y="372" width="1" height="28" fill="#000"/>
<rect x="428" y="399" width="219" height="1" fill="#000"/>
<text x="442" y="388" font-size="16" font-weight="bold" text-anchor="start" fill="#000" textLength="185" lengthAdjust="spacingAndGlyphs" filter="url(#crisp)">s1hit1:s2hit1 {evtype==4}</text>
</svg>
</body></html>
